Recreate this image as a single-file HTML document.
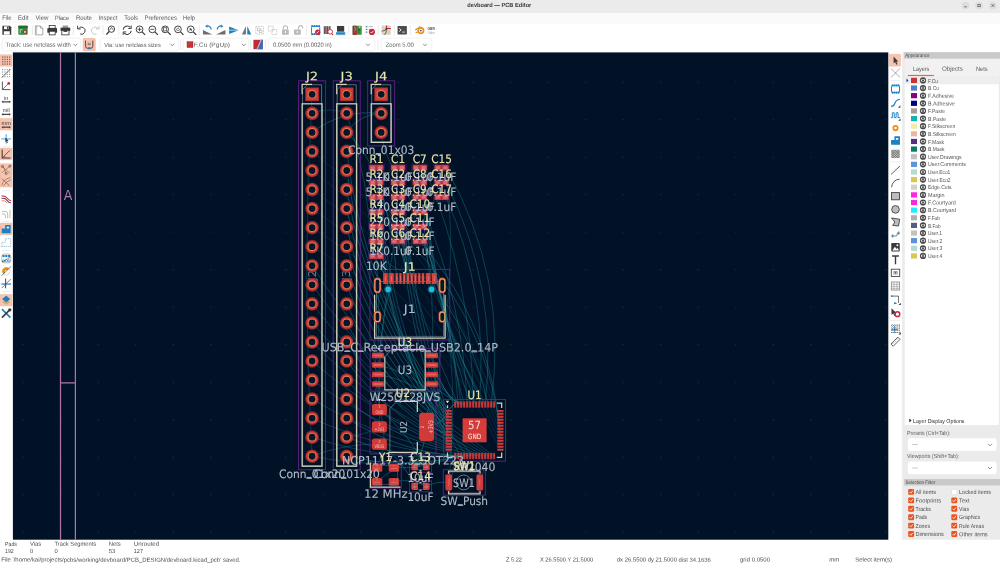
<!DOCTYPE html><html lang="en"><head><meta charset="utf-8"><title>devboard — PCB Editor</title><style>
*{box-sizing:border-box;margin:0;padding:0}
html,body{width:1000px;height:564px;overflow:hidden;background:#fff}
body{position:relative;font-family:"Liberation Sans","DejaVu Sans",sans-serif;color:#4f4f4f}
.a{position:absolute;white-space:nowrap;line-height:1}
#title{left:0;top:0;width:1000px;height:12px;background:#ebebeb}
.wb{top:1.8px;width:7.4px;height:7.4px;border-radius:50%;background:#dedede}
.ti{font-weight:bold;font-size:6.3px;color:#3a3a3a}
.m{font-size:6.15px;color:#545454}
.combo{top:38.1px;height:12.8px;border:.6px solid #e9e9e9;border-radius:2.4px;background:#fff}
.ct{font-size:5.9px;color:#5c5c5c}
#canvas{left:13px;top:53px;width:875px;height:486px;background:#011227}
#panel{left:903px;top:53px;width:97px;height:486px;background:#ebebeb}
.ph{left:903.4px;width:96.6px;height:6.4px;background:#c9c9c9}
.pht{font-size:4.9px;color:#4c4c4c}
.tab{font-size:6.3px;color:#5a5a5a}
.ln{font-size:5.55px;color:#585858}
.sw{width:6.1px;height:6.1px}
.cb{width:5.9px;height:5.9px;border-radius:1.2px;background:#e95420}
.cl{font-size:5.85px;color:#4c4c4c}
.st{font-size:5.85px;color:#4c4c4c}
.wbx{background:#fff;border-radius:2.4px}
svg{position:absolute;left:0;top:0;will-change:transform}
</style></head><body>
<div id="title" class="a"></div>
<div id="canvas" class="a"></div>
<div id="panel" class="a"></div>
<svg width="1000" height="564" viewBox="0 0 1000 564">
<defs><clipPath id="cv"><rect x="12.9" y="52.4" width="875.4" height="487.30000000000007"/></clipPath><pattern id="gd" x="735.2" y="81.6" width="37.5" height="37.5" patternUnits="userSpaceOnUse"><rect width="1.1" height="1.1" fill="#2b4669" fill-opacity=".55"/></pattern></defs>
<rect x="0" y="0" width="1000" height="564" fill="#fff"/><rect x="0" y="0" width="1000" height="12.2" fill="#ebebeb"/><rect x="0" y="12.1" width="1000" height="0.6" fill="#d6d6d6"/><rect x="0" y="12.7" width="1000" height="10.8" fill="#fafafa"/><circle cx="965.5" cy="5.5" r="3.75" fill="#dddddd"/><circle cx="979" cy="5.5" r="3.75" fill="#dddddd"/><circle cx="992.8" cy="5.5" r="3.75" fill="#dddddd"/><rect x="2.2" y="38.1" width="78.4" height="12.9" rx="2.4" fill="#fff" stroke="#e8e8e8" stroke-width=".6"/><rect x="100" y="38.1" width="78.4" height="12.9" rx="2.4" fill="#fff" stroke="#e8e8e8" stroke-width=".6"/><rect x="183.2" y="38.1" width="65.4" height="12.9" rx="2.4" fill="#fff" stroke="#e8e8e8" stroke-width=".6"/><rect x="268.2" y="38.1" width="106.6" height="12.9" rx="2.4" fill="#fff" stroke="#e8e8e8" stroke-width=".6"/><rect x="381" y="38.1" width="50.8" height="12.9" rx="2.4" fill="#fff" stroke="#e8e8e8" stroke-width=".6"/><rect x="12.9" y="52.4" width="875.4" height="487.30000000000007" fill="#011227"/><rect x="12.9" y="52.4" width="875.4" height="487.30000000000007" fill="url(#gd)"/><rect x="902.1" y="52.2" width="97.9" height="487.5" fill="#ebebeb"/><rect x="904.1" y="52.2" width="95.9" height="6.6" fill="#c9c9c9"/><rect x="904.8" y="58.8" width="95.2" height="17.4" fill="#f1f1f1"/><rect x="904.8" y="76.2" width="95.2" height="0.5" fill="#dcdcdc"/><rect x="907.8" y="74.9" width="26.1" height="1.3" fill="#e9683c"/><rect x="904.8" y="76.6" width="94" height="348.4" fill="#fff"/><rect x="904.8" y="76.6" width="94" height="7.7" fill="#eeeeee"/><rect x="911" y="77.80" width="6" height="5.2" fill="#c83434"/><rect x="911" y="85.43" width="6" height="5.2" fill="#4d7fc4"/><rect x="911" y="93.06" width="6" height="5.2" fill="#840084"/><rect x="911" y="100.70" width="6" height="5.2" fill="#000084"/><rect x="911" y="108.33" width="6" height="5.2" fill="#a89c98"/><rect x="911" y="115.96" width="6" height="5.2" fill="#12b2b0"/><rect x="911" y="123.59" width="6" height="5.2" fill="#f2eda1"/><rect x="911" y="131.22" width="6" height="5.2" fill="#e8b8a4"/><rect x="911" y="138.86" width="6" height="5.2" fill="#5a2d80"/><rect x="911" y="146.49" width="6" height="5.2" fill="#0a7a66"/><rect x="911" y="154.12" width="6" height="5.2" fill="#c2c2c2"/><rect x="911" y="161.75" width="6" height="5.2" fill="#5994dc"/><rect x="911" y="169.38" width="6" height="5.2" fill="#b4dbd2"/><rect x="911" y="177.02" width="6" height="5.2" fill="#d8c852"/><rect x="911" y="184.65" width="6" height="5.2" fill="#d0d2cd"/><rect x="911" y="192.28" width="6" height="5.2" fill="#ff26e2"/><rect x="911" y="199.91" width="6" height="5.2" fill="#ff26e2"/><rect x="911" y="207.54" width="6" height="5.2" fill="#26e9ff"/><rect x="911" y="215.18" width="6" height="5.2" fill="#afafaf"/><rect x="911" y="222.81" width="6" height="5.2" fill="#585d84"/><rect x="911" y="230.44" width="6" height="5.2" fill="#c2c2c2"/><rect x="911" y="238.07" width="6" height="5.2" fill="#5994dc"/><rect x="911" y="245.70" width="6" height="5.2" fill="#b4dbd2"/><rect x="911" y="253.34" width="6" height="5.2" fill="#d8c852"/><rect x="907.8" y="438.3" width="88.8" height="12.8" rx="2.4" fill="#fff"/><rect x="907.8" y="461.5" width="88.8" height="12.8" rx="2.4" fill="#fff"/><rect x="904.1" y="479" width="95.9" height="6.5" fill="#c9c9c9"/><rect x="908.2" y="488.95" width="5.9" height="5.9" rx="1.2" fill="#e95420"/><rect x="951.5" y="489.15" width="5.5" height="5.5" rx="1.2" fill="#fff" stroke="#cfcfcf" stroke-width=".5"/><rect x="908.2" y="497.38" width="5.9" height="5.9" rx="1.2" fill="#e95420"/><rect x="951.3" y="497.38" width="5.9" height="5.9" rx="1.2" fill="#e95420"/><rect x="908.2" y="505.81" width="5.9" height="5.9" rx="1.2" fill="#e95420"/><rect x="951.3" y="505.81" width="5.9" height="5.9" rx="1.2" fill="#e95420"/><rect x="908.2" y="514.24" width="5.9" height="5.9" rx="1.2" fill="#e95420"/><rect x="951.3" y="514.24" width="5.9" height="5.9" rx="1.2" fill="#e95420"/><rect x="908.2" y="522.67" width="5.9" height="5.9" rx="1.2" fill="#e95420"/><rect x="951.3" y="522.67" width="5.9" height="5.9" rx="1.2" fill="#e95420"/><rect x="908.2" y="531.10" width="5.9" height="5.9" rx="1.2" fill="#e95420"/><rect x="951.3" y="531.10" width="5.9" height="5.9" rx="1.2" fill="#e95420"/>
<g clip-path="url(#cv)"><path d="M60.5 52 V540 M75.4 52 V540 M60.5 382.9 H75.4" stroke="#b274a6" stroke-width="1.25" fill="none"/><text x="68" y="199.7" font-size="14.6" text-anchor="middle" fill="#b579aa" font-family="DejaVu Sans,sans-serif" textLength="8.6" lengthAdjust="spacingAndGlyphs">A</text><g font-family="DejaVu Sans,Liberation Sans,sans-serif"><g fill="none" stroke="#1d8a98" stroke-width=".85"><path d="M346.7 151.45 Q364.03 294.4 448.8 410.8" stroke-opacity="0.52"/><path d="M346.7 170.5 Q366.12 305.42 448.8 413.8" stroke-opacity="0.52"/><path d="M346.7 189.55 Q368.21 316.45 448.8 416.8" stroke-opacity="0.52"/><path d="M346.7 208.6 Q370.29 327.47 448.8 419.8" stroke-opacity="0.52"/><path d="M346.7 227.65 Q372.38 338.5 448.8 422.8" stroke-opacity="0.52"/><path d="M346.7 246.7 Q374.47 349.52 448.8 425.8" stroke-opacity="0.52"/><path d="M346.7 265.75 Q376.55 360.55 448.8 428.8" stroke-opacity="0.52"/><path d="M346.7 284.8 Q378.64 371.57 448.8 431.8" stroke-opacity="0.52"/><path d="M346.7 303.85 Q380.73 382.6 448.8 434.8" stroke-opacity="0.52"/><path d="M346.7 322.9 Q382.81 393.62 448.8 437.8" stroke-opacity="0.52"/><path d="M346.7 341.95 Q384.9 404.65 448.8 440.8" stroke-opacity="0.52"/><path d="M346.7 361 Q386.99 415.67 448.8 443.8" stroke-opacity="0.52"/><path d="M346.7 380.05 Q389.07 426.7 448.8 446.8" stroke-opacity="0.52"/><path d="M346.7 399.1 Q391.16 437.72 448.8 449.8" stroke-opacity="0.52"/><path d="M346.7 418.15 Q396.35 450.13 455.1 456.1" stroke-opacity="0.52"/><path d="M346.7 437.2 Q400.13 460.02 458.1 456.1" stroke-opacity="0.52"/><path d="M346.7 456.25 Q403.92 469.9 461.1 456.1" stroke-opacity="0.52"/><path d="M312.1 456.25 Q388.12 471.38 464.1 456.1" stroke-opacity="0.42"/><path d="M312.1 437.2 Q387.71 462.15 467.1 456.1" stroke-opacity="0.42"/><path d="M312.1 418.15 Q387.31 452.93 470.1 456.1" stroke-opacity="0.42"/><path d="M312.1 399.1 Q386.9 443.7 473.1 456.1" stroke-opacity="0.42"/><path d="M312.1 380.05 Q386.5 434.48 476.1 456.1" stroke-opacity="0.42"/><path d="M312.1 361 Q386.09 425.25 479.1 456.1" stroke-opacity="0.42"/><path d="M312.1 341.95 Q385.69 416.02 482.1 456.1" stroke-opacity="0.42"/><path d="M312.1 322.9 Q385.28 406.8 485.1 456.1" stroke-opacity="0.42"/><path d="M312.1 303.85 Q384.88 397.58 488.1 456.1" stroke-opacity="0.42"/><path d="M312.1 284.8 Q384.47 388.35 491.1 456.1" stroke-opacity="0.42"/><path d="M312.1 265.75 Q384.06 379.12 494.1 456.1" stroke-opacity="0.42"/><path d="M312.1 246.7 Q438.75 318.12 500.4 449.8" stroke-opacity="0.22"/><path d="M312.1 227.65 Q440.83 305.6 500.4 443.8" stroke-opacity="0.22"/><path d="M312.1 208.6 Q442.92 293.07 500.4 437.8" stroke-opacity="0.22"/><path d="M312.1 189.55 Q445.01 280.55 500.4 431.8" stroke-opacity="0.22"/><path d="M312.1 170.5 Q447.1 268.02 500.4 425.8" stroke-opacity="0.22"/><path d="M312.1 151.45 Q449.19 255.5 500.4 419.8" stroke-opacity="0.22"/><path d="M312.1 132.4 Q342.84 109.06 381.2 113.35" stroke-opacity="0.52"/><path d="M346.7 132.4 Q359.19 114.25 381.2 113.35" stroke-opacity="0.52"/><path d="M312.1 94.3 Q301.24 275.27 312.1 456.25" stroke-opacity="0.39"/><path d="M346.7 113.35 Q329.4 106.43 312.1 113.35" stroke-opacity="0.39"/><path d="M346.7 132.4 Q362.88 147.52 372 167.7" stroke-opacity="0.52"/><path d="M346.7 113.35 Q370.26 182.73 371 256" stroke-opacity="0.45"/><path d="M381.2 132.4 Q383.57 151.23 393 167.7" stroke-opacity="0.45"/><path d="M446 167.7 Q508.81 278.43 491.1 404.5" stroke-opacity="0.47"/><path d="M446 182.5 Q498.85 287.63 485.1 404.5" stroke-opacity="0.47"/><path d="M446 197.2 Q489.5 296.55 479.1 404.5" stroke-opacity="0.47"/><path d="M424.5 167.7 Q472.48 281.24 473.1 404.5" stroke-opacity="0.47"/><path d="M424.5 212 Q463.12 304.42 467.1 404.5" stroke-opacity="0.47"/><path d="M402.8 182.5 Q447.49 289.42 461.1 404.5" stroke-opacity="0.47"/><path d="M424.5 241.5 Q454.34 320.31 458.1 404.5" stroke-opacity="0.47"/><path d="M401.9 182.45 Q411.29 302.44 448.8 416.8" stroke-opacity="0.47"/><path d="M401.9 197.2 Q409.56 313.28 448.8 422.8" stroke-opacity="0.47"/><path d="M401.9 211.95 Q408 324.13 448.8 428.8" stroke-opacity="0.47"/><path d="M401.9 226.7 Q406.62 334.97 448.8 434.8" stroke-opacity="0.47"/><path d="M401.9 241.45 Q421.85 325.79 458.1 404.5" stroke-opacity="0.47"/><path d="M423.6 182.45 Q434.97 295.1 464.1 404.5" stroke-opacity="0.47"/><path d="M423.6 197.2 Q436.49 303.18 470.1 404.5" stroke-opacity="0.47"/><path d="M423.6 211.95 Q438.3 311.38 476.1 404.5" stroke-opacity="0.47"/><path d="M423.6 226.7 Q440.4 319.7 482.1 404.5" stroke-opacity="0.47"/><path d="M423.6 241.45 Q441.31 327.9 485.1 404.5" stroke-opacity="0.47"/><path d="M380.2 197.2 Q390.14 325.86 448.8 440.8" stroke-opacity="0.47"/><path d="M380.2 211.95 Q389 335.42 448.8 443.8" stroke-opacity="0.47"/><path d="M380.2 226.7 Q388.09 344.98 448.8 446.8" stroke-opacity="0.47"/><path d="M380.2 241.45 Q394.89 358.48 461.1 456.1" stroke-opacity="0.47"/><path d="M380.2 256.2 Q397.66 367.45 467.1 456.1" stroke-opacity="0.47"/><path d="M394.4 167.7 Q390.71 175.07 394.4 182.45" stroke-opacity="0.39"/><path d="M394.4 182.45 Q390.71 189.82 394.4 197.2" stroke-opacity="0.39"/><path d="M394.4 197.2 Q390.71 204.57 394.4 211.95" stroke-opacity="0.39"/><path d="M394.4 211.95 Q390.71 219.32 394.4 226.7" stroke-opacity="0.39"/><path d="M394.4 226.7 Q390.71 234.07 394.4 241.45" stroke-opacity="0.39"/><path d="M416.1 167.7 Q412.41 175.07 416.1 182.45" stroke-opacity="0.39"/><path d="M416.1 182.45 Q412.41 189.82 416.1 197.2" stroke-opacity="0.39"/><path d="M416.1 197.2 Q412.41 204.57 416.1 211.95" stroke-opacity="0.39"/><path d="M416.1 211.95 Q412.41 219.32 416.1 226.7" stroke-opacity="0.39"/><path d="M416.1 226.7 Q412.41 234.07 416.1 241.45" stroke-opacity="0.39"/><path d="M385.85 278.6 Q381.47 266.07 372.6 256.2" stroke-opacity="0.59"/><path d="M433.85 278.6 Q402.44 278.17 380 256.2" stroke-opacity="0.45"/><path d="M396.85 278.6 Q393.6 221.21 372.6 167.7" stroke-opacity="0.52"/><path d="M415.45 278.6 Q403.64 226.27 372.6 182.5" stroke-opacity="0.52"/><path d="M407.95 278.6 Q398.96 236.24 380.2 197.2" stroke-opacity="0.52"/><path d="M411.75 278.6 Q399.97 243.41 380.2 212" stroke-opacity="0.52"/><path d="M372.6 197.2 Q489.43 289.38 500.4 437.8" stroke-opacity="0.49"/><path d="M372.6 212 Q485.52 295.28 500.4 434.8" stroke-opacity="0.49"/><path d="M391.85 278.6 Q375.14 343.1 379.4 409.6" stroke-opacity="0.52"/><path d="M427.85 278.6 Q473.08 334.32 488.1 404.5" stroke-opacity="0.52"/><path d="M377.4 285.4 Q370.95 347.62 379.4 409.6" stroke-opacity="0.45"/><path d="M442.3 285.4 Q459.44 383.43 449 482.4" stroke-opacity="0.39"/><path d="M432.2 355.5 Q437.77 382.75 455.1 404.5" stroke-opacity="0.59"/><path d="M432.2 365 Q440.41 387.86 458.1 404.5" stroke-opacity="0.59"/><path d="M432.2 374.5 Q443.05 392.97 461.1 404.5" stroke-opacity="0.59"/><path d="M432.2 384 Q445.69 398.08 464.1 404.5" stroke-opacity="0.59"/><path d="M377.7 365 Q423.01 375.18 448.8 413.8" stroke-opacity="0.52"/><path d="M377.7 374.5 Q421.71 381.43 448.8 416.8" stroke-opacity="0.52"/><path d="M377.7 355.5 Q381.59 290.85 372.6 226.7" stroke-opacity="0.45"/><path d="M377.7 384 Q370.87 397.31 379.4 409.6" stroke-opacity="0.52"/><path d="M432.2 355.5 Q435.19 298.04 424.5 241.5" stroke-opacity="0.45"/><path d="M426.7 426.9 Q442.58 425.48 448.8 410.8" stroke-opacity="0.59"/><path d="M426.7 426.9 Q455.74 432.22 473.1 456.1" stroke-opacity="0.52"/><path d="M426.7 426.9 Q424.69 448.05 414.7 466.8" stroke-opacity="0.59"/><path d="M379.4 444.1 Q403.39 459.95 414.7 486.4" stroke-opacity="0.52"/><path d="M379.4 409.6 Q408.57 433.51 426.3 466.8" stroke-opacity="0.52"/><path d="M426.7 415 Q461.08 293.28 446 167.7" stroke-opacity="0.39"/><path d="M379.4 426.9 Q377.63 333.45 394.4 241.5" stroke-opacity="0.39"/><path d="M393.9 467.8 Q425.9 469.29 455.1 456.1" stroke-opacity="0.59"/><path d="M377.1 481.8 Q411.95 451.13 458.1 456.1" stroke-opacity="0.55"/><path d="M393.9 481.8 Q411.02 477.62 426.3 486.4" stroke-opacity="0.52"/><path d="M377.1 467.8 Q389.89 439.16 379.4 409.6" stroke-opacity="0.45"/><path d="M479.8 482.4 Q486.21 469.71 482.1 456.1" stroke-opacity="0.55"/><path d="M448.8 482.4 Q436.95 481.02 426.3 486.4" stroke-opacity="0.52"/><path d="M448.8 482.4 Q458.58 466.1 448.8 449.8" stroke-opacity="0.45"/><path d="M312.1 456.25 Q344.54 443.44 379.4 444.1" stroke-opacity="0.45"/><path d="M346.7 437.2 Q364.08 435.32 379.4 426.9" stroke-opacity="0.45"/></g><rect x="298.6" y="80.8" width="27" height="388.95" fill="none" stroke="#66208a" stroke-width=".9"/><path d="M307.34 84.77 H321.62 V465.77 H302.58 V89.54 Z" fill="none" stroke="#8893a0" stroke-width=".8" stroke-opacity=".85"/><rect x="302.12" y="103.83" width="19.95" height="362.4" fill="none" stroke="#cfd2bc" stroke-width="1.25"/><path d="M302.12 94.3 V84.32 H312.1" fill="none" stroke="#cfd2bc" stroke-width="1.25"/><text x="312.1" y="279.07" font-size="10.4" text-anchor="middle" textLength="11.02" lengthAdjust="spacingAndGlyphs" fill="#b2bbc7" fill-opacity="0.55" stroke="#b2bbc7" stroke-opacity="0.55" stroke-width="0.12" transform="rotate(-90 312.1 275.27)">J2</text><rect x="305.25" y="87.45" width="13.7" height="13.7" fill="#a82c30"/><rect x="306.15" y="88.35" width="11.9" height="11.9" fill="#d23c36"/><circle cx="312.1" cy="94.3" r="5" fill="#d84c38"/><circle cx="312.1" cy="94.3" r="4.05" fill="#e48a5e"/><circle cx="312.1" cy="94.3" r="3.4" fill="#071629"/><circle cx="312.1" cy="113.35" r="6.85" fill="#86262f"/><circle cx="312.1" cy="113.35" r="5.95" fill="#c63734"/><circle cx="312.1" cy="113.35" r="5" fill="#d84c38"/><circle cx="312.1" cy="113.35" r="4.05" fill="#e48a5e"/><circle cx="312.1" cy="113.35" r="3.4" fill="#071629"/><circle cx="312.1" cy="132.4" r="6.85" fill="#86262f"/><circle cx="312.1" cy="132.4" r="5.95" fill="#c63734"/><circle cx="312.1" cy="132.4" r="5" fill="#d84c38"/><circle cx="312.1" cy="132.4" r="4.05" fill="#e48a5e"/><circle cx="312.1" cy="132.4" r="3.4" fill="#071629"/><circle cx="312.1" cy="151.45" r="6.85" fill="#86262f"/><circle cx="312.1" cy="151.45" r="5.95" fill="#c63734"/><circle cx="312.1" cy="151.45" r="5" fill="#d84c38"/><circle cx="312.1" cy="151.45" r="4.05" fill="#e48a5e"/><circle cx="312.1" cy="151.45" r="3.4" fill="#071629"/><circle cx="312.1" cy="170.5" r="6.85" fill="#86262f"/><circle cx="312.1" cy="170.5" r="5.95" fill="#c63734"/><circle cx="312.1" cy="170.5" r="5" fill="#d84c38"/><circle cx="312.1" cy="170.5" r="4.05" fill="#e48a5e"/><circle cx="312.1" cy="170.5" r="3.4" fill="#071629"/><circle cx="312.1" cy="189.55" r="6.85" fill="#86262f"/><circle cx="312.1" cy="189.55" r="5.95" fill="#c63734"/><circle cx="312.1" cy="189.55" r="5" fill="#d84c38"/><circle cx="312.1" cy="189.55" r="4.05" fill="#e48a5e"/><circle cx="312.1" cy="189.55" r="3.4" fill="#071629"/><circle cx="312.1" cy="208.6" r="6.85" fill="#86262f"/><circle cx="312.1" cy="208.6" r="5.95" fill="#c63734"/><circle cx="312.1" cy="208.6" r="5" fill="#d84c38"/><circle cx="312.1" cy="208.6" r="4.05" fill="#e48a5e"/><circle cx="312.1" cy="208.6" r="3.4" fill="#071629"/><circle cx="312.1" cy="227.65" r="6.85" fill="#86262f"/><circle cx="312.1" cy="227.65" r="5.95" fill="#c63734"/><circle cx="312.1" cy="227.65" r="5" fill="#d84c38"/><circle cx="312.1" cy="227.65" r="4.05" fill="#e48a5e"/><circle cx="312.1" cy="227.65" r="3.4" fill="#071629"/><circle cx="312.1" cy="246.7" r="6.85" fill="#86262f"/><circle cx="312.1" cy="246.7" r="5.95" fill="#c63734"/><circle cx="312.1" cy="246.7" r="5" fill="#d84c38"/><circle cx="312.1" cy="246.7" r="4.05" fill="#e48a5e"/><circle cx="312.1" cy="246.7" r="3.4" fill="#071629"/><circle cx="312.1" cy="265.75" r="6.85" fill="#86262f"/><circle cx="312.1" cy="265.75" r="5.95" fill="#c63734"/><circle cx="312.1" cy="265.75" r="5" fill="#d84c38"/><circle cx="312.1" cy="265.75" r="4.05" fill="#e48a5e"/><circle cx="312.1" cy="265.75" r="3.4" fill="#071629"/><circle cx="312.1" cy="284.8" r="6.85" fill="#86262f"/><circle cx="312.1" cy="284.8" r="5.95" fill="#c63734"/><circle cx="312.1" cy="284.8" r="5" fill="#d84c38"/><circle cx="312.1" cy="284.8" r="4.05" fill="#e48a5e"/><circle cx="312.1" cy="284.8" r="3.4" fill="#071629"/><circle cx="312.1" cy="303.85" r="6.85" fill="#86262f"/><circle cx="312.1" cy="303.85" r="5.95" fill="#c63734"/><circle cx="312.1" cy="303.85" r="5" fill="#d84c38"/><circle cx="312.1" cy="303.85" r="4.05" fill="#e48a5e"/><circle cx="312.1" cy="303.85" r="3.4" fill="#071629"/><circle cx="312.1" cy="322.9" r="6.85" fill="#86262f"/><circle cx="312.1" cy="322.9" r="5.95" fill="#c63734"/><circle cx="312.1" cy="322.9" r="5" fill="#d84c38"/><circle cx="312.1" cy="322.9" r="4.05" fill="#e48a5e"/><circle cx="312.1" cy="322.9" r="3.4" fill="#071629"/><circle cx="312.1" cy="341.95" r="6.85" fill="#86262f"/><circle cx="312.1" cy="341.95" r="5.95" fill="#c63734"/><circle cx="312.1" cy="341.95" r="5" fill="#d84c38"/><circle cx="312.1" cy="341.95" r="4.05" fill="#e48a5e"/><circle cx="312.1" cy="341.95" r="3.4" fill="#071629"/><circle cx="312.1" cy="361" r="6.85" fill="#86262f"/><circle cx="312.1" cy="361" r="5.95" fill="#c63734"/><circle cx="312.1" cy="361" r="5" fill="#d84c38"/><circle cx="312.1" cy="361" r="4.05" fill="#e48a5e"/><circle cx="312.1" cy="361" r="3.4" fill="#071629"/><circle cx="312.1" cy="380.05" r="6.85" fill="#86262f"/><circle cx="312.1" cy="380.05" r="5.95" fill="#c63734"/><circle cx="312.1" cy="380.05" r="5" fill="#d84c38"/><circle cx="312.1" cy="380.05" r="4.05" fill="#e48a5e"/><circle cx="312.1" cy="380.05" r="3.4" fill="#071629"/><circle cx="312.1" cy="399.1" r="6.85" fill="#86262f"/><circle cx="312.1" cy="399.1" r="5.95" fill="#c63734"/><circle cx="312.1" cy="399.1" r="5" fill="#d84c38"/><circle cx="312.1" cy="399.1" r="4.05" fill="#e48a5e"/><circle cx="312.1" cy="399.1" r="3.4" fill="#071629"/><circle cx="312.1" cy="418.15" r="6.85" fill="#86262f"/><circle cx="312.1" cy="418.15" r="5.95" fill="#c63734"/><circle cx="312.1" cy="418.15" r="5" fill="#d84c38"/><circle cx="312.1" cy="418.15" r="4.05" fill="#e48a5e"/><circle cx="312.1" cy="418.15" r="3.4" fill="#071629"/><circle cx="312.1" cy="437.2" r="6.85" fill="#86262f"/><circle cx="312.1" cy="437.2" r="5.95" fill="#c63734"/><circle cx="312.1" cy="437.2" r="5" fill="#d84c38"/><circle cx="312.1" cy="437.2" r="4.05" fill="#e48a5e"/><circle cx="312.1" cy="437.2" r="3.4" fill="#071629"/><circle cx="312.1" cy="456.25" r="6.85" fill="#86262f"/><circle cx="312.1" cy="456.25" r="5.95" fill="#c63734"/><circle cx="312.1" cy="456.25" r="5" fill="#d84c38"/><circle cx="312.1" cy="456.25" r="4.05" fill="#e48a5e"/><circle cx="312.1" cy="456.25" r="3.4" fill="#071629"/><rect x="333.2" y="80.8" width="27" height="388.95" fill="none" stroke="#66208a" stroke-width=".9"/><path d="M341.94 84.77 H356.22 V465.77 H337.18 V89.54 Z" fill="none" stroke="#8893a0" stroke-width=".8" stroke-opacity=".85"/><rect x="336.72" y="103.83" width="19.95" height="362.4" fill="none" stroke="#cfd2bc" stroke-width="1.25"/><path d="M336.72 94.3 V84.32 H346.7" fill="none" stroke="#cfd2bc" stroke-width="1.25"/><text x="346.7" y="279.07" font-size="10.4" text-anchor="middle" textLength="11.02" lengthAdjust="spacingAndGlyphs" fill="#b2bbc7" fill-opacity="0.55" stroke="#b2bbc7" stroke-opacity="0.55" stroke-width="0.12" transform="rotate(-90 346.7 275.27)">J3</text><rect x="339.85" y="87.45" width="13.7" height="13.7" fill="#a82c30"/><rect x="340.75" y="88.35" width="11.9" height="11.9" fill="#d23c36"/><circle cx="346.7" cy="94.3" r="5" fill="#d84c38"/><circle cx="346.7" cy="94.3" r="4.05" fill="#e48a5e"/><circle cx="346.7" cy="94.3" r="3.4" fill="#071629"/><circle cx="346.7" cy="113.35" r="6.85" fill="#86262f"/><circle cx="346.7" cy="113.35" r="5.95" fill="#c63734"/><circle cx="346.7" cy="113.35" r="5" fill="#d84c38"/><circle cx="346.7" cy="113.35" r="4.05" fill="#e48a5e"/><circle cx="346.7" cy="113.35" r="3.4" fill="#071629"/><circle cx="346.7" cy="132.4" r="6.85" fill="#86262f"/><circle cx="346.7" cy="132.4" r="5.95" fill="#c63734"/><circle cx="346.7" cy="132.4" r="5" fill="#d84c38"/><circle cx="346.7" cy="132.4" r="4.05" fill="#e48a5e"/><circle cx="346.7" cy="132.4" r="3.4" fill="#071629"/><circle cx="346.7" cy="151.45" r="6.85" fill="#86262f"/><circle cx="346.7" cy="151.45" r="5.95" fill="#c63734"/><circle cx="346.7" cy="151.45" r="5" fill="#d84c38"/><circle cx="346.7" cy="151.45" r="4.05" fill="#e48a5e"/><circle cx="346.7" cy="151.45" r="3.4" fill="#071629"/><circle cx="346.7" cy="170.5" r="6.85" fill="#86262f"/><circle cx="346.7" cy="170.5" r="5.95" fill="#c63734"/><circle cx="346.7" cy="170.5" r="5" fill="#d84c38"/><circle cx="346.7" cy="170.5" r="4.05" fill="#e48a5e"/><circle cx="346.7" cy="170.5" r="3.4" fill="#071629"/><circle cx="346.7" cy="189.55" r="6.85" fill="#86262f"/><circle cx="346.7" cy="189.55" r="5.95" fill="#c63734"/><circle cx="346.7" cy="189.55" r="5" fill="#d84c38"/><circle cx="346.7" cy="189.55" r="4.05" fill="#e48a5e"/><circle cx="346.7" cy="189.55" r="3.4" fill="#071629"/><circle cx="346.7" cy="208.6" r="6.85" fill="#86262f"/><circle cx="346.7" cy="208.6" r="5.95" fill="#c63734"/><circle cx="346.7" cy="208.6" r="5" fill="#d84c38"/><circle cx="346.7" cy="208.6" r="4.05" fill="#e48a5e"/><circle cx="346.7" cy="208.6" r="3.4" fill="#071629"/><circle cx="346.7" cy="227.65" r="6.85" fill="#86262f"/><circle cx="346.7" cy="227.65" r="5.95" fill="#c63734"/><circle cx="346.7" cy="227.65" r="5" fill="#d84c38"/><circle cx="346.7" cy="227.65" r="4.05" fill="#e48a5e"/><circle cx="346.7" cy="227.65" r="3.4" fill="#071629"/><circle cx="346.7" cy="246.7" r="6.85" fill="#86262f"/><circle cx="346.7" cy="246.7" r="5.95" fill="#c63734"/><circle cx="346.7" cy="246.7" r="5" fill="#d84c38"/><circle cx="346.7" cy="246.7" r="4.05" fill="#e48a5e"/><circle cx="346.7" cy="246.7" r="3.4" fill="#071629"/><circle cx="346.7" cy="265.75" r="6.85" fill="#86262f"/><circle cx="346.7" cy="265.75" r="5.95" fill="#c63734"/><circle cx="346.7" cy="265.75" r="5" fill="#d84c38"/><circle cx="346.7" cy="265.75" r="4.05" fill="#e48a5e"/><circle cx="346.7" cy="265.75" r="3.4" fill="#071629"/><circle cx="346.7" cy="284.8" r="6.85" fill="#86262f"/><circle cx="346.7" cy="284.8" r="5.95" fill="#c63734"/><circle cx="346.7" cy="284.8" r="5" fill="#d84c38"/><circle cx="346.7" cy="284.8" r="4.05" fill="#e48a5e"/><circle cx="346.7" cy="284.8" r="3.4" fill="#071629"/><circle cx="346.7" cy="303.85" r="6.85" fill="#86262f"/><circle cx="346.7" cy="303.85" r="5.95" fill="#c63734"/><circle cx="346.7" cy="303.85" r="5" fill="#d84c38"/><circle cx="346.7" cy="303.85" r="4.05" fill="#e48a5e"/><circle cx="346.7" cy="303.85" r="3.4" fill="#071629"/><circle cx="346.7" cy="322.9" r="6.85" fill="#86262f"/><circle cx="346.7" cy="322.9" r="5.95" fill="#c63734"/><circle cx="346.7" cy="322.9" r="5" fill="#d84c38"/><circle cx="346.7" cy="322.9" r="4.05" fill="#e48a5e"/><circle cx="346.7" cy="322.9" r="3.4" fill="#071629"/><circle cx="346.7" cy="341.95" r="6.85" fill="#86262f"/><circle cx="346.7" cy="341.95" r="5.95" fill="#c63734"/><circle cx="346.7" cy="341.95" r="5" fill="#d84c38"/><circle cx="346.7" cy="341.95" r="4.05" fill="#e48a5e"/><circle cx="346.7" cy="341.95" r="3.4" fill="#071629"/><circle cx="346.7" cy="361" r="6.85" fill="#86262f"/><circle cx="346.7" cy="361" r="5.95" fill="#c63734"/><circle cx="346.7" cy="361" r="5" fill="#d84c38"/><circle cx="346.7" cy="361" r="4.05" fill="#e48a5e"/><circle cx="346.7" cy="361" r="3.4" fill="#071629"/><circle cx="346.7" cy="380.05" r="6.85" fill="#86262f"/><circle cx="346.7" cy="380.05" r="5.95" fill="#c63734"/><circle cx="346.7" cy="380.05" r="5" fill="#d84c38"/><circle cx="346.7" cy="380.05" r="4.05" fill="#e48a5e"/><circle cx="346.7" cy="380.05" r="3.4" fill="#071629"/><circle cx="346.7" cy="399.1" r="6.85" fill="#86262f"/><circle cx="346.7" cy="399.1" r="5.95" fill="#c63734"/><circle cx="346.7" cy="399.1" r="5" fill="#d84c38"/><circle cx="346.7" cy="399.1" r="4.05" fill="#e48a5e"/><circle cx="346.7" cy="399.1" r="3.4" fill="#071629"/><circle cx="346.7" cy="418.15" r="6.85" fill="#86262f"/><circle cx="346.7" cy="418.15" r="5.95" fill="#c63734"/><circle cx="346.7" cy="418.15" r="5" fill="#d84c38"/><circle cx="346.7" cy="418.15" r="4.05" fill="#e48a5e"/><circle cx="346.7" cy="418.15" r="3.4" fill="#071629"/><circle cx="346.7" cy="437.2" r="6.85" fill="#86262f"/><circle cx="346.7" cy="437.2" r="5.95" fill="#c63734"/><circle cx="346.7" cy="437.2" r="5" fill="#d84c38"/><circle cx="346.7" cy="437.2" r="4.05" fill="#e48a5e"/><circle cx="346.7" cy="437.2" r="3.4" fill="#071629"/><circle cx="346.7" cy="456.25" r="6.85" fill="#86262f"/><circle cx="346.7" cy="456.25" r="5.95" fill="#c63734"/><circle cx="346.7" cy="456.25" r="5" fill="#d84c38"/><circle cx="346.7" cy="456.25" r="4.05" fill="#e48a5e"/><circle cx="346.7" cy="456.25" r="3.4" fill="#071629"/><rect x="367.7" y="80.8" width="27" height="65.1" fill="none" stroke="#66208a" stroke-width=".9"/><path d="M376.44 84.77 H390.72 V141.93 H371.68 V89.54 Z" fill="none" stroke="#8893a0" stroke-width=".8" stroke-opacity=".85"/><rect x="371.22" y="103.83" width="19.95" height="38.55" fill="none" stroke="#cfd2bc" stroke-width="1.25"/><path d="M371.22 94.3 V84.32 H381.2" fill="none" stroke="#cfd2bc" stroke-width="1.25"/><rect x="374.35" y="87.45" width="13.7" height="13.7" fill="#a82c30"/><rect x="375.25" y="88.35" width="11.9" height="11.9" fill="#d23c36"/><circle cx="381.2" cy="94.3" r="5" fill="#d84c38"/><circle cx="381.2" cy="94.3" r="4.05" fill="#e48a5e"/><circle cx="381.2" cy="94.3" r="3.4" fill="#071629"/><circle cx="381.2" cy="113.35" r="6.85" fill="#86262f"/><circle cx="381.2" cy="113.35" r="5.95" fill="#c63734"/><circle cx="381.2" cy="113.35" r="5" fill="#d84c38"/><circle cx="381.2" cy="113.35" r="4.05" fill="#e48a5e"/><circle cx="381.2" cy="113.35" r="3.4" fill="#071629"/><circle cx="381.2" cy="132.4" r="6.85" fill="#86262f"/><circle cx="381.2" cy="132.4" r="5.95" fill="#c63734"/><circle cx="381.2" cy="132.4" r="5" fill="#d84c38"/><circle cx="381.2" cy="132.4" r="4.05" fill="#e48a5e"/><circle cx="381.2" cy="132.4" r="3.4" fill="#071629"/><rect x="368.3" y="163.95" width="16.2" height="7.5" fill="none" stroke="#66208a" stroke-width=".6" stroke-opacity=".6"/><rect x="369.2" y="164.8" width="14.4" height="5.8" rx="1.2" fill="#c93e46"/><rect x="375.9" y="164.8" width="1" height="5.8" fill="#8a2c3c" fill-opacity=".55"/><rect x="370.4" y="166.2" width="4.4" height="3" rx="1" fill="#e89aa2" fill-opacity=".5"/><rect x="378" y="166.2" width="4.4" height="3" rx="1" fill="#e89aa2" fill-opacity=".5"/><rect x="368.3" y="178.7" width="16.2" height="7.5" fill="none" stroke="#66208a" stroke-width=".6" stroke-opacity=".6"/><rect x="369.2" y="179.55" width="14.4" height="5.8" rx="1.2" fill="#c93e46"/><rect x="375.9" y="179.55" width="1" height="5.8" fill="#8a2c3c" fill-opacity=".55"/><rect x="370.4" y="180.95" width="4.4" height="3" rx="1" fill="#e89aa2" fill-opacity=".5"/><rect x="378" y="180.95" width="4.4" height="3" rx="1" fill="#e89aa2" fill-opacity=".5"/><rect x="368.3" y="193.45" width="16.2" height="7.5" fill="none" stroke="#66208a" stroke-width=".6" stroke-opacity=".6"/><rect x="369.2" y="194.3" width="14.4" height="5.8" rx="1.2" fill="#c93e46"/><rect x="375.9" y="194.3" width="1" height="5.8" fill="#8a2c3c" fill-opacity=".55"/><rect x="370.4" y="195.7" width="4.4" height="3" rx="1" fill="#e89aa2" fill-opacity=".5"/><rect x="378" y="195.7" width="4.4" height="3" rx="1" fill="#e89aa2" fill-opacity=".5"/><rect x="368.3" y="208.2" width="16.2" height="7.5" fill="none" stroke="#66208a" stroke-width=".6" stroke-opacity=".6"/><rect x="369.2" y="209.05" width="14.4" height="5.8" rx="1.2" fill="#c93e46"/><rect x="375.9" y="209.05" width="1" height="5.8" fill="#8a2c3c" fill-opacity=".55"/><rect x="370.4" y="210.45" width="4.4" height="3" rx="1" fill="#e89aa2" fill-opacity=".5"/><rect x="378" y="210.45" width="4.4" height="3" rx="1" fill="#e89aa2" fill-opacity=".5"/><rect x="368.3" y="222.95" width="16.2" height="7.5" fill="none" stroke="#66208a" stroke-width=".6" stroke-opacity=".6"/><rect x="369.2" y="223.8" width="14.4" height="5.8" rx="1.2" fill="#c93e46"/><rect x="375.9" y="223.8" width="1" height="5.8" fill="#8a2c3c" fill-opacity=".55"/><rect x="370.4" y="225.2" width="4.4" height="3" rx="1" fill="#e89aa2" fill-opacity=".5"/><rect x="378" y="225.2" width="4.4" height="3" rx="1" fill="#e89aa2" fill-opacity=".5"/><rect x="368.3" y="237.7" width="16.2" height="7.5" fill="none" stroke="#66208a" stroke-width=".6" stroke-opacity=".6"/><rect x="369.2" y="238.55" width="14.4" height="5.8" rx="1.2" fill="#c93e46"/><rect x="375.9" y="238.55" width="1" height="5.8" fill="#8a2c3c" fill-opacity=".55"/><rect x="370.4" y="239.95" width="4.4" height="3" rx="1" fill="#e89aa2" fill-opacity=".5"/><rect x="378" y="239.95" width="4.4" height="3" rx="1" fill="#e89aa2" fill-opacity=".5"/><rect x="368.3" y="252.45" width="16.2" height="7.5" fill="none" stroke="#66208a" stroke-width=".6" stroke-opacity=".6"/><rect x="369.2" y="253.3" width="14.4" height="5.8" rx="1.2" fill="#c93e46"/><rect x="375.9" y="253.3" width="1" height="5.8" fill="#8a2c3c" fill-opacity=".55"/><rect x="370.4" y="254.7" width="4.4" height="3" rx="1" fill="#e89aa2" fill-opacity=".5"/><rect x="378" y="254.7" width="4.4" height="3" rx="1" fill="#e89aa2" fill-opacity=".5"/><rect x="390" y="163.95" width="16.2" height="7.5" fill="none" stroke="#66208a" stroke-width=".6" stroke-opacity=".6"/><rect x="390.9" y="164.8" width="14.4" height="5.8" rx="1.2" fill="#c93e46"/><rect x="397.6" y="164.8" width="1" height="5.8" fill="#8a2c3c" fill-opacity=".55"/><rect x="392.1" y="166.2" width="4.4" height="3" rx="1" fill="#e89aa2" fill-opacity=".5"/><rect x="399.7" y="166.2" width="4.4" height="3" rx="1" fill="#e89aa2" fill-opacity=".5"/><rect x="411.7" y="163.95" width="16.2" height="7.5" fill="none" stroke="#66208a" stroke-width=".6" stroke-opacity=".6"/><rect x="412.6" y="164.8" width="14.4" height="5.8" rx="1.2" fill="#c93e46"/><rect x="419.3" y="164.8" width="1" height="5.8" fill="#8a2c3c" fill-opacity=".55"/><rect x="413.8" y="166.2" width="4.4" height="3" rx="1" fill="#e89aa2" fill-opacity=".5"/><rect x="421.4" y="166.2" width="4.4" height="3" rx="1" fill="#e89aa2" fill-opacity=".5"/><rect x="390" y="178.7" width="16.2" height="7.5" fill="none" stroke="#66208a" stroke-width=".6" stroke-opacity=".6"/><rect x="390.9" y="179.55" width="14.4" height="5.8" rx="1.2" fill="#c93e46"/><rect x="397.6" y="179.55" width="1" height="5.8" fill="#8a2c3c" fill-opacity=".55"/><rect x="392.1" y="180.95" width="4.4" height="3" rx="1" fill="#e89aa2" fill-opacity=".5"/><rect x="399.7" y="180.95" width="4.4" height="3" rx="1" fill="#e89aa2" fill-opacity=".5"/><rect x="411.7" y="178.7" width="16.2" height="7.5" fill="none" stroke="#66208a" stroke-width=".6" stroke-opacity=".6"/><rect x="412.6" y="179.55" width="14.4" height="5.8" rx="1.2" fill="#c93e46"/><rect x="419.3" y="179.55" width="1" height="5.8" fill="#8a2c3c" fill-opacity=".55"/><rect x="413.8" y="180.95" width="4.4" height="3" rx="1" fill="#e89aa2" fill-opacity=".5"/><rect x="421.4" y="180.95" width="4.4" height="3" rx="1" fill="#e89aa2" fill-opacity=".5"/><rect x="390" y="193.45" width="16.2" height="7.5" fill="none" stroke="#66208a" stroke-width=".6" stroke-opacity=".6"/><rect x="390.9" y="194.3" width="14.4" height="5.8" rx="1.2" fill="#c93e46"/><rect x="397.6" y="194.3" width="1" height="5.8" fill="#8a2c3c" fill-opacity=".55"/><rect x="392.1" y="195.7" width="4.4" height="3" rx="1" fill="#e89aa2" fill-opacity=".5"/><rect x="399.7" y="195.7" width="4.4" height="3" rx="1" fill="#e89aa2" fill-opacity=".5"/><rect x="411.7" y="193.45" width="16.2" height="7.5" fill="none" stroke="#66208a" stroke-width=".6" stroke-opacity=".6"/><rect x="412.6" y="194.3" width="14.4" height="5.8" rx="1.2" fill="#c93e46"/><rect x="419.3" y="194.3" width="1" height="5.8" fill="#8a2c3c" fill-opacity=".55"/><rect x="413.8" y="195.7" width="4.4" height="3" rx="1" fill="#e89aa2" fill-opacity=".5"/><rect x="421.4" y="195.7" width="4.4" height="3" rx="1" fill="#e89aa2" fill-opacity=".5"/><rect x="390" y="208.2" width="16.2" height="7.5" fill="none" stroke="#66208a" stroke-width=".6" stroke-opacity=".6"/><rect x="390.9" y="209.05" width="14.4" height="5.8" rx="1.2" fill="#c93e46"/><rect x="397.6" y="209.05" width="1" height="5.8" fill="#8a2c3c" fill-opacity=".55"/><rect x="392.1" y="210.45" width="4.4" height="3" rx="1" fill="#e89aa2" fill-opacity=".5"/><rect x="399.7" y="210.45" width="4.4" height="3" rx="1" fill="#e89aa2" fill-opacity=".5"/><rect x="411.7" y="208.2" width="16.2" height="7.5" fill="none" stroke="#66208a" stroke-width=".6" stroke-opacity=".6"/><rect x="412.6" y="209.05" width="14.4" height="5.8" rx="1.2" fill="#c93e46"/><rect x="419.3" y="209.05" width="1" height="5.8" fill="#8a2c3c" fill-opacity=".55"/><rect x="413.8" y="210.45" width="4.4" height="3" rx="1" fill="#e89aa2" fill-opacity=".5"/><rect x="421.4" y="210.45" width="4.4" height="3" rx="1" fill="#e89aa2" fill-opacity=".5"/><rect x="390" y="222.95" width="16.2" height="7.5" fill="none" stroke="#66208a" stroke-width=".6" stroke-opacity=".6"/><rect x="390.9" y="223.8" width="14.4" height="5.8" rx="1.2" fill="#c93e46"/><rect x="397.6" y="223.8" width="1" height="5.8" fill="#8a2c3c" fill-opacity=".55"/><rect x="392.1" y="225.2" width="4.4" height="3" rx="1" fill="#e89aa2" fill-opacity=".5"/><rect x="399.7" y="225.2" width="4.4" height="3" rx="1" fill="#e89aa2" fill-opacity=".5"/><rect x="411.7" y="222.95" width="16.2" height="7.5" fill="none" stroke="#66208a" stroke-width=".6" stroke-opacity=".6"/><rect x="412.6" y="223.8" width="14.4" height="5.8" rx="1.2" fill="#c93e46"/><rect x="419.3" y="223.8" width="1" height="5.8" fill="#8a2c3c" fill-opacity=".55"/><rect x="413.8" y="225.2" width="4.4" height="3" rx="1" fill="#e89aa2" fill-opacity=".5"/><rect x="421.4" y="225.2" width="4.4" height="3" rx="1" fill="#e89aa2" fill-opacity=".5"/><rect x="390" y="237.7" width="16.2" height="7.5" fill="none" stroke="#66208a" stroke-width=".6" stroke-opacity=".6"/><rect x="390.9" y="238.55" width="14.4" height="5.8" rx="1.2" fill="#c93e46"/><rect x="397.6" y="238.55" width="1" height="5.8" fill="#8a2c3c" fill-opacity=".55"/><rect x="392.1" y="239.95" width="4.4" height="3" rx="1" fill="#e89aa2" fill-opacity=".5"/><rect x="399.7" y="239.95" width="4.4" height="3" rx="1" fill="#e89aa2" fill-opacity=".5"/><rect x="411.7" y="237.7" width="16.2" height="7.5" fill="none" stroke="#66208a" stroke-width=".6" stroke-opacity=".6"/><rect x="412.6" y="238.55" width="14.4" height="5.8" rx="1.2" fill="#c93e46"/><rect x="419.3" y="238.55" width="1" height="5.8" fill="#8a2c3c" fill-opacity=".55"/><rect x="413.8" y="239.95" width="4.4" height="3" rx="1" fill="#e89aa2" fill-opacity=".5"/><rect x="421.4" y="239.95" width="4.4" height="3" rx="1" fill="#e89aa2" fill-opacity=".5"/><rect x="433.5" y="163.95" width="16.2" height="7.5" fill="none" stroke="#66208a" stroke-width=".6" stroke-opacity=".6"/><rect x="434.4" y="164.8" width="14.4" height="5.8" rx="1.2" fill="#c93e46"/><rect x="441.1" y="164.8" width="1" height="5.8" fill="#8a2c3c" fill-opacity=".55"/><rect x="435.6" y="166.2" width="4.4" height="3" rx="1" fill="#e89aa2" fill-opacity=".5"/><rect x="443.2" y="166.2" width="4.4" height="3" rx="1" fill="#e89aa2" fill-opacity=".5"/><rect x="433.5" y="178.7" width="16.2" height="7.5" fill="none" stroke="#66208a" stroke-width=".6" stroke-opacity=".6"/><rect x="434.4" y="179.55" width="14.4" height="5.8" rx="1.2" fill="#c93e46"/><rect x="441.1" y="179.55" width="1" height="5.8" fill="#8a2c3c" fill-opacity=".55"/><rect x="435.6" y="180.95" width="4.4" height="3" rx="1" fill="#e89aa2" fill-opacity=".5"/><rect x="443.2" y="180.95" width="4.4" height="3" rx="1" fill="#e89aa2" fill-opacity=".5"/><rect x="433.5" y="193.45" width="16.2" height="7.5" fill="none" stroke="#66208a" stroke-width=".6" stroke-opacity=".6"/><rect x="434.4" y="194.3" width="14.4" height="5.8" rx="1.2" fill="#c93e46"/><rect x="441.1" y="194.3" width="1" height="5.8" fill="#8a2c3c" fill-opacity=".55"/><rect x="435.6" y="195.7" width="4.4" height="3" rx="1" fill="#e89aa2" fill-opacity=".5"/><rect x="443.2" y="195.7" width="4.4" height="3" rx="1" fill="#e89aa2" fill-opacity=".5"/><rect x="369.95" y="269.38" width="79.8" height="70.65" fill="none" stroke="#66208a" stroke-width=".9"/><rect x="376.33" y="281.52" width="67.05" height="54.75" fill="none" stroke="#8893a0" stroke-width=".7" stroke-opacity=".8"/><path d="M374.6 294.65 V338.15 H445.1 V294.65" fill="none" stroke="#cfd2bc" stroke-width="1.25"/><rect x="383.23" y="273.12" width="4.5" height="10.88" fill="#d8443f"/><rect x="385.03" y="275.96" width=".9" height="5.2" fill="#f2a8a8" fill-opacity=".5"/><rect x="389.23" y="273.12" width="4.5" height="10.88" fill="#d8443f"/><rect x="391.03" y="275.96" width=".9" height="5.2" fill="#f2a8a8" fill-opacity=".5"/><rect x="395.6" y="273.12" width="2.25" height="10.88" fill="#d8443f"/><rect x="396.28" y="275.96" width=".9" height="5.2" fill="#f2a8a8" fill-opacity=".5"/><rect x="399.35" y="273.12" width="2.25" height="10.88" fill="#d8443f"/><rect x="400.03" y="275.96" width=".9" height="5.2" fill="#f2a8a8" fill-opacity=".5"/><rect x="403.1" y="273.12" width="2.25" height="10.88" fill="#d8443f"/><rect x="403.78" y="275.96" width=".9" height="5.2" fill="#f2a8a8" fill-opacity=".5"/><rect x="406.85" y="273.12" width="2.25" height="10.88" fill="#d8443f"/><rect x="407.53" y="275.96" width=".9" height="5.2" fill="#f2a8a8" fill-opacity=".5"/><rect x="410.6" y="273.12" width="2.25" height="10.88" fill="#d8443f"/><rect x="411.28" y="275.96" width=".9" height="5.2" fill="#f2a8a8" fill-opacity=".5"/><rect x="414.35" y="273.12" width="2.25" height="10.88" fill="#d8443f"/><rect x="415.03" y="275.96" width=".9" height="5.2" fill="#f2a8a8" fill-opacity=".5"/><rect x="418.1" y="273.12" width="2.25" height="10.88" fill="#d8443f"/><rect x="418.78" y="275.96" width=".9" height="5.2" fill="#f2a8a8" fill-opacity=".5"/><rect x="421.85" y="273.12" width="2.25" height="10.88" fill="#d8443f"/><rect x="422.53" y="275.96" width=".9" height="5.2" fill="#f2a8a8" fill-opacity=".5"/><rect x="425.98" y="273.12" width="4.5" height="10.88" fill="#d8443f"/><rect x="427.78" y="275.96" width=".9" height="5.2" fill="#f2a8a8" fill-opacity=".5"/><rect x="431.98" y="273.12" width="4.5" height="10.88" fill="#d8443f"/><rect x="433.78" y="275.96" width=".9" height="5.2" fill="#f2a8a8" fill-opacity=".5"/><rect x="383.23" y="273.12" width="53.25" height="10.88" fill="#d03a38" fill-opacity=".22"/><rect x="373.7" y="277.55" width="7.5" height="15.75" rx="3.75" fill="#d03a38"/><rect x="374.38" y="278.22" width="6.15" height="14.4" rx="3.07" fill="#eea45c"/><rect x="375.58" y="279.42" width="3.75" height="12" rx="1.88" fill="#071629"/><rect x="373.7" y="310.77" width="7.5" height="12" rx="3.75" fill="#d03a38"/><rect x="374.38" y="311.45" width="6.15" height="10.65" rx="3.07" fill="#eea45c"/><rect x="375.58" y="312.65" width="3.75" height="8.25" rx="1.88" fill="#071629"/><rect x="438.5" y="277.55" width="7.5" height="15.75" rx="3.75" fill="#d03a38"/><rect x="439.18" y="278.22" width="6.15" height="14.4" rx="3.07" fill="#eea45c"/><rect x="440.38" y="279.42" width="3.75" height="12" rx="1.88" fill="#071629"/><rect x="438.5" y="310.77" width="7.5" height="12" rx="3.75" fill="#d03a38"/><rect x="439.18" y="311.45" width="6.15" height="10.65" rx="3.07" fill="#eea45c"/><rect x="440.38" y="312.65" width="3.75" height="8.25" rx="1.88" fill="#071629"/><circle cx="388.18" cy="289.4" r="4.2" fill="#0d4f66" fill-opacity=".85"/><circle cx="388.18" cy="289.4" r="2.8" fill="#1fbedb"/><circle cx="431.53" cy="289.4" r="4.2" fill="#0d4f66" fill-opacity=".85"/><circle cx="431.53" cy="289.4" r="2.8" fill="#1fbedb"/><rect x="370.12" y="348.3" width="69.75" height="42.9" fill="none" stroke="#66208a" stroke-width=".9"/><rect x="371.9" y="352.76" width="12.2" height="5.4" rx="1.2" fill="#d03a38"/><rect x="373.6" y="354.56" width="8.8" height="1.8" fill="#f2a8a8" fill-opacity=".4"/><rect x="371.9" y="362.29" width="12.2" height="5.4" rx="1.2" fill="#d03a38"/><rect x="373.6" y="364.09" width="8.8" height="1.8" fill="#f2a8a8" fill-opacity=".4"/><rect x="371.9" y="371.81" width="12.2" height="5.4" rx="1.2" fill="#d03a38"/><rect x="373.6" y="373.61" width="8.8" height="1.8" fill="#f2a8a8" fill-opacity=".4"/><rect x="371.9" y="381.34" width="12.2" height="5.4" rx="1.2" fill="#d03a38"/><rect x="373.6" y="383.14" width="8.8" height="1.8" fill="#f2a8a8" fill-opacity=".4"/><rect x="425.9" y="352.76" width="12.2" height="5.4" rx="1.2" fill="#d03a38"/><rect x="427.6" y="354.56" width="8.8" height="1.8" fill="#f2a8a8" fill-opacity=".4"/><rect x="425.9" y="362.29" width="12.2" height="5.4" rx="1.2" fill="#d03a38"/><rect x="427.6" y="364.09" width="8.8" height="1.8" fill="#f2a8a8" fill-opacity=".4"/><rect x="425.9" y="371.81" width="12.2" height="5.4" rx="1.2" fill="#d03a38"/><rect x="427.6" y="373.61" width="8.8" height="1.8" fill="#f2a8a8" fill-opacity=".4"/><rect x="425.9" y="381.34" width="12.2" height="5.4" rx="1.2" fill="#d03a38"/><rect x="427.6" y="383.14" width="8.8" height="1.8" fill="#f2a8a8" fill-opacity=".4"/><path d="M391.82 349.57 H425.18 V389.93 H384.82 V356.57" fill="none" stroke="#cfd2bc" stroke-width="1.15"/><path d="M384.82 356.57 L391.82 349.57" stroke="#8893a0" stroke-width=".7"/><path d="M378.75 350.1 l-1.6 -2.2 h3.2 z" fill="#ece8ae"/><rect x="370" y="399.9" width="66" height="54" fill="none" stroke="#66208a" stroke-width=".9"/><rect x="371.88" y="404.02" width="15" height="11.25" rx="2.6" fill="#d03a38"/><rect x="371.88" y="421.27" width="15" height="11.25" rx="2.6" fill="#d03a38"/><rect x="371.88" y="438.52" width="15" height="11.25" rx="2.6" fill="#d03a38"/><rect x="419.12" y="412.65" width="15" height="28.5" rx="3.4" fill="#d03a38"/><path d="M394.68 401.32 H417.32 V411.9 M417.32 441.9 V452.47 H388.68" fill="none" stroke="#cfd2bc" stroke-width="1.25"/><path d="M389.88 451.27 V408.52 L395.88 402.52" fill="none" stroke="#8893a0" stroke-width=".7"/><path d="M379.38 401.25 l-1.7 -2.3 h3.4 z" fill="#ece8ae"/><rect x="443.7" y="399.4" width="61.8" height="61.8" fill="none" stroke="#66208a" stroke-width=".9"/><rect x="454.28" y="401.24" width="1.65" height="6.56" rx=".8" fill="#d03a38"/><rect x="454.28" y="452.8" width="1.65" height="6.56" rx=".8" fill="#d03a38"/><rect x="445.54" y="409.98" width="6.56" height="1.65" rx=".8" fill="#d03a38"/><rect x="497.1" y="409.98" width="6.56" height="1.65" rx=".8" fill="#d03a38"/><rect x="457.28" y="401.24" width="1.65" height="6.56" rx=".8" fill="#d03a38"/><rect x="457.28" y="452.8" width="1.65" height="6.56" rx=".8" fill="#d03a38"/><rect x="445.54" y="412.98" width="6.56" height="1.65" rx=".8" fill="#d03a38"/><rect x="497.1" y="412.98" width="6.56" height="1.65" rx=".8" fill="#d03a38"/><rect x="460.28" y="401.24" width="1.65" height="6.56" rx=".8" fill="#d03a38"/><rect x="460.28" y="452.8" width="1.65" height="6.56" rx=".8" fill="#d03a38"/><rect x="445.54" y="415.98" width="6.56" height="1.65" rx=".8" fill="#d03a38"/><rect x="497.1" y="415.98" width="6.56" height="1.65" rx=".8" fill="#d03a38"/><rect x="463.28" y="401.24" width="1.65" height="6.56" rx=".8" fill="#d03a38"/><rect x="463.28" y="452.8" width="1.65" height="6.56" rx=".8" fill="#d03a38"/><rect x="445.54" y="418.98" width="6.56" height="1.65" rx=".8" fill="#d03a38"/><rect x="497.1" y="418.98" width="6.56" height="1.65" rx=".8" fill="#d03a38"/><rect x="466.28" y="401.24" width="1.65" height="6.56" rx=".8" fill="#d03a38"/><rect x="466.28" y="452.8" width="1.65" height="6.56" rx=".8" fill="#d03a38"/><rect x="445.54" y="421.98" width="6.56" height="1.65" rx=".8" fill="#d03a38"/><rect x="497.1" y="421.98" width="6.56" height="1.65" rx=".8" fill="#d03a38"/><rect x="469.28" y="401.24" width="1.65" height="6.56" rx=".8" fill="#d03a38"/><rect x="469.28" y="452.8" width="1.65" height="6.56" rx=".8" fill="#d03a38"/><rect x="445.54" y="424.98" width="6.56" height="1.65" rx=".8" fill="#d03a38"/><rect x="497.1" y="424.98" width="6.56" height="1.65" rx=".8" fill="#d03a38"/><rect x="472.28" y="401.24" width="1.65" height="6.56" rx=".8" fill="#d03a38"/><rect x="472.28" y="452.8" width="1.65" height="6.56" rx=".8" fill="#d03a38"/><rect x="445.54" y="427.98" width="6.56" height="1.65" rx=".8" fill="#d03a38"/><rect x="497.1" y="427.98" width="6.56" height="1.65" rx=".8" fill="#d03a38"/><rect x="475.28" y="401.24" width="1.65" height="6.56" rx=".8" fill="#d03a38"/><rect x="475.28" y="452.8" width="1.65" height="6.56" rx=".8" fill="#d03a38"/><rect x="445.54" y="430.98" width="6.56" height="1.65" rx=".8" fill="#d03a38"/><rect x="497.1" y="430.98" width="6.56" height="1.65" rx=".8" fill="#d03a38"/><rect x="478.28" y="401.24" width="1.65" height="6.56" rx=".8" fill="#d03a38"/><rect x="478.28" y="452.8" width="1.65" height="6.56" rx=".8" fill="#d03a38"/><rect x="445.54" y="433.98" width="6.56" height="1.65" rx=".8" fill="#d03a38"/><rect x="497.1" y="433.98" width="6.56" height="1.65" rx=".8" fill="#d03a38"/><rect x="481.28" y="401.24" width="1.65" height="6.56" rx=".8" fill="#d03a38"/><rect x="481.28" y="452.8" width="1.65" height="6.56" rx=".8" fill="#d03a38"/><rect x="445.54" y="436.98" width="6.56" height="1.65" rx=".8" fill="#d03a38"/><rect x="497.1" y="436.98" width="6.56" height="1.65" rx=".8" fill="#d03a38"/><rect x="484.28" y="401.24" width="1.65" height="6.56" rx=".8" fill="#d03a38"/><rect x="484.28" y="452.8" width="1.65" height="6.56" rx=".8" fill="#d03a38"/><rect x="445.54" y="439.98" width="6.56" height="1.65" rx=".8" fill="#d03a38"/><rect x="497.1" y="439.98" width="6.56" height="1.65" rx=".8" fill="#d03a38"/><rect x="487.28" y="401.24" width="1.65" height="6.56" rx=".8" fill="#d03a38"/><rect x="487.28" y="452.8" width="1.65" height="6.56" rx=".8" fill="#d03a38"/><rect x="445.54" y="442.98" width="6.56" height="1.65" rx=".8" fill="#d03a38"/><rect x="497.1" y="442.98" width="6.56" height="1.65" rx=".8" fill="#d03a38"/><rect x="490.28" y="401.24" width="1.65" height="6.56" rx=".8" fill="#d03a38"/><rect x="490.28" y="452.8" width="1.65" height="6.56" rx=".8" fill="#d03a38"/><rect x="445.54" y="445.98" width="6.56" height="1.65" rx=".8" fill="#d03a38"/><rect x="497.1" y="445.98" width="6.56" height="1.65" rx=".8" fill="#d03a38"/><rect x="493.28" y="401.24" width="1.65" height="6.56" rx=".8" fill="#d03a38"/><rect x="493.28" y="452.8" width="1.65" height="6.56" rx=".8" fill="#d03a38"/><rect x="445.54" y="448.98" width="6.56" height="1.65" rx=".8" fill="#d03a38"/><rect x="497.1" y="448.98" width="6.56" height="1.65" rx=".8" fill="#d03a38"/><rect x="454.28" y="401.24" width="40.65" height="6.56" fill="#d03a38" fill-opacity=".28"/><rect x="454.28" y="452.8" width="40.65" height="6.56" fill="#d03a38" fill-opacity=".28"/><rect x="445.54" y="409.98" width="6.56" height="40.65" fill="#d03a38" fill-opacity=".28"/><rect x="497.1" y="409.98" width="6.56" height="40.65" fill="#d03a38" fill-opacity=".28"/><rect x="462.6" y="418.3" width="24" height="24" fill="#d83c3a"/><path d="M496.8 403.23 H501.68 V408.1 M501.68 452.5 V457.38 H496.8 M452.4 457.38 H447.53 V452.5 M447.53 408.1 V405.23" fill="none" stroke="#cfd2bc" stroke-width="1.25"/><path d="M448.35 410.05 L454.35 404.05" stroke="#8893a0" stroke-width=".6"/><path d="M447.45 403.15 l-1.7 -2.3 h3.4 z" fill="#ece8ae"/><rect x="369.75" y="461.73" width="31.5" height="26.25" fill="none" stroke="#66208a" stroke-width=".9"/><rect x="371.85" y="463.95" width="10.5" height="7.8" rx="1.6" fill="#d03a38"/><rect x="374.1" y="467.65" width="6" height="1.6" fill="#f2a8a8" fill-opacity=".35"/><rect x="376.5" y="465.05" width="1.2" height="1.8" fill="#f2a8a8" fill-opacity=".4"/><rect x="371.85" y="477.95" width="10.5" height="7.8" rx="1.6" fill="#d03a38"/><rect x="374.1" y="481.65" width="6" height="1.6" fill="#f2a8a8" fill-opacity=".35"/><rect x="376.5" y="479.05" width="1.2" height="1.8" fill="#f2a8a8" fill-opacity=".4"/><rect x="388.65" y="463.95" width="10.5" height="7.8" rx="1.6" fill="#d03a38"/><rect x="390.9" y="467.65" width="6" height="1.6" fill="#f2a8a8" fill-opacity=".35"/><rect x="393.3" y="465.05" width="1.2" height="1.8" fill="#f2a8a8" fill-opacity=".4"/><rect x="388.65" y="477.95" width="10.5" height="7.8" rx="1.6" fill="#d03a38"/><rect x="390.9" y="481.65" width="6" height="1.6" fill="#f2a8a8" fill-opacity=".35"/><rect x="393.3" y="479.05" width="1.2" height="1.8" fill="#f2a8a8" fill-opacity=".4"/><path d="M370.5 462.48 V487.23 H400.5" fill="none" stroke="#cfd2bc" stroke-width="1.25"/><rect x="373.5" y="465.48" width="24" height="18.75" fill="none" stroke="#8893a0" stroke-width=".5" stroke-opacity=".7"/><rect x="409.4" y="461.32" width="22.2" height="10.95" fill="none" stroke="#66208a" stroke-width=".8"/><rect x="411.31" y="463.24" width="6.75" height="7.12" rx="1.4" fill="#d03a38"/><rect x="412.69" y="466.6" width="4" height="1.4" fill="#f2a8a8" fill-opacity=".4"/><rect x="414.19" y="464.4" width="1" height="1.5" fill="#f2a8a8" fill-opacity=".4"/><rect x="422.94" y="463.24" width="6.75" height="7.12" rx="1.4" fill="#d03a38"/><rect x="424.31" y="466.6" width="4" height="1.4" fill="#f2a8a8" fill-opacity=".4"/><rect x="425.81" y="464.4" width="1" height="1.5" fill="#f2a8a8" fill-opacity=".4"/><rect x="414.5" y="463.8" width="12" height="6" fill="none" stroke="#8893a0" stroke-width=".5" stroke-opacity=".7"/><path d="M419.5 462.98 H421.5 M419.5 470.62 H421.5" stroke="#cfd2bc" stroke-width="1"/><rect x="409.4" y="480.92" width="22.2" height="10.95" fill="none" stroke="#66208a" stroke-width=".8"/><rect x="411.31" y="482.84" width="6.75" height="7.12" rx="1.4" fill="#d03a38"/><rect x="412.69" y="486.2" width="4" height="1.4" fill="#f2a8a8" fill-opacity=".4"/><rect x="414.19" y="484" width="1" height="1.5" fill="#f2a8a8" fill-opacity=".4"/><rect x="422.94" y="482.84" width="6.75" height="7.12" rx="1.4" fill="#d03a38"/><rect x="424.31" y="486.2" width="4" height="1.4" fill="#f2a8a8" fill-opacity=".4"/><rect x="425.81" y="484" width="1" height="1.5" fill="#f2a8a8" fill-opacity=".4"/><rect x="414.5" y="483.4" width="12" height="6" fill="none" stroke="#8893a0" stroke-width=".5" stroke-opacity=".7"/><path d="M419.5 482.57 H421.5 M419.5 490.22 H421.5" stroke="#cfd2bc" stroke-width="1"/><rect x="443.3" y="469.65" width="42" height="25.5" fill="none" stroke="#66208a" stroke-width=".9"/><rect x="445.4" y="474.4" width="6.8" height="16" rx="1.4" fill="#d03a38"/><rect x="448.3" y="478.9" width="1" height="7" fill="#f2a8a8" fill-opacity=".35"/><rect x="476.4" y="474.4" width="6.8" height="16" rx="1.4" fill="#d03a38"/><rect x="479.3" y="478.9" width="1" height="7" fill="#f2a8a8" fill-opacity=".35"/><path d="M448.55 473.8 V471 H480.05 V473.8 M448.55 491 V493.8 H480.05 V491" fill="none" stroke="#cfd2bc" stroke-width="1.25"/><circle cx="463.7" cy="482.4" r="7.4" fill="none" stroke="#8893a0" stroke-width=".8"/><rect x="449.7" y="472" width="29.2" height="20.8" fill="none" stroke="#8893a0" stroke-width=".5" stroke-opacity=".6"/><text x="312.1" y="80.16" font-size="11.6" text-anchor="middle" textLength="12.24" lengthAdjust="spacingAndGlyphs" fill="#ece8ae" fill-opacity="1" stroke="#ece8ae" stroke-opacity="1" stroke-width="0.12" transform="rotate(.03 312.1 75.92)">J2</text><text x="312.1" y="477.96" font-size="11.6" text-anchor="middle" textLength="66.3" lengthAdjust="spacingAndGlyphs" fill="#b2bbc7" fill-opacity="1" stroke="#b2bbc7" stroke-opacity="1" stroke-width="0.12" transform="rotate(.03 312.1 473.72)">Conn<tspan dy="-2">_</tspan><tspan dy="2">0</tspan>1x20</text><path d="M306.75 477.41 h4.73" stroke="#b2bbc7" stroke-opacity="1" stroke-width="1" fill="none"/><text x="346.7" y="80.16" font-size="11.6" text-anchor="middle" textLength="12.24" lengthAdjust="spacingAndGlyphs" fill="#ece8ae" fill-opacity="1" stroke="#ece8ae" stroke-opacity="1" stroke-width="0.12" transform="rotate(.03 346.7 75.92)">J3</text><text x="346.7" y="477.96" font-size="11.6" text-anchor="middle" textLength="66.3" lengthAdjust="spacingAndGlyphs" fill="#b2bbc7" fill-opacity="1" stroke="#b2bbc7" stroke-opacity="1" stroke-width="0.12" transform="rotate(.03 346.7 473.72)">Conn<tspan dy="-2">_</tspan><tspan dy="2">0</tspan>1x20</text><path d="M341.35 477.41 h4.73" stroke="#b2bbc7" stroke-opacity="1" stroke-width="1" fill="none"/><text x="381.2" y="80.16" font-size="11.6" text-anchor="middle" textLength="12.24" lengthAdjust="spacingAndGlyphs" fill="#ece8ae" fill-opacity="1" stroke="#ece8ae" stroke-opacity="1" stroke-width="0.12" transform="rotate(.03 381.2 75.92)">J4</text><text x="381.2" y="154.11" font-size="11.6" text-anchor="middle" textLength="66.3" lengthAdjust="spacingAndGlyphs" fill="#b2bbc7" fill-opacity="1" stroke="#b2bbc7" stroke-opacity="1" stroke-width="0.12" transform="rotate(.03 381.2 149.88)">Conn<tspan dy="-2">_</tspan><tspan dy="2">0</tspan>1x03</text><path d="M375.85 153.56 h4.73" stroke="#b2bbc7" stroke-opacity="1" stroke-width="1" fill="none"/><text x="377.6" y="181.33" font-size="11.6" text-anchor="middle" textLength="24.14" lengthAdjust="spacingAndGlyphs" fill="#b2bbc7" fill-opacity="1" stroke="#b2bbc7" stroke-opacity="1" stroke-width="0.12" transform="rotate(.03 377.6 177.1)">5.1K</text><text x="377.6" y="196.08" font-size="11.6" text-anchor="middle" textLength="24.14" lengthAdjust="spacingAndGlyphs" fill="#b2bbc7" fill-opacity="1" stroke="#b2bbc7" stroke-opacity="1" stroke-width="0.12" transform="rotate(.03 377.6 191.85)">5.1K</text><text x="376.4" y="210.83" font-size="11.6" text-anchor="middle" textLength="13.6" lengthAdjust="spacingAndGlyphs" fill="#b2bbc7" fill-opacity="1" stroke="#b2bbc7" stroke-opacity="1" stroke-width="0.12" transform="rotate(.03 376.4 206.6)">27</text><text x="376.4" y="225.58" font-size="11.6" text-anchor="middle" textLength="13.6" lengthAdjust="spacingAndGlyphs" fill="#b2bbc7" fill-opacity="1" stroke="#b2bbc7" stroke-opacity="1" stroke-width="0.12" transform="rotate(.03 376.4 221.35)">27</text><text x="376.4" y="240.33" font-size="11.6" text-anchor="middle" textLength="13.94" lengthAdjust="spacingAndGlyphs" fill="#b2bbc7" fill-opacity="1" stroke="#b2bbc7" stroke-opacity="1" stroke-width="0.12" transform="rotate(.03 376.4 236.1)">1K</text><text x="376.4" y="255.08" font-size="11.6" text-anchor="middle" textLength="13.94" lengthAdjust="spacingAndGlyphs" fill="#b2bbc7" fill-opacity="1" stroke="#b2bbc7" stroke-opacity="1" stroke-width="0.12" transform="rotate(.03 376.4 250.85)">1K</text><text x="376.4" y="269.83" font-size="11.6" text-anchor="middle" textLength="20.74" lengthAdjust="spacingAndGlyphs" fill="#b2bbc7" fill-opacity="1" stroke="#b2bbc7" stroke-opacity="1" stroke-width="0.12" transform="rotate(.03 376.4 265.6)">10K</text><text x="398.1" y="181.33" font-size="11.6" text-anchor="middle" textLength="29.58" lengthAdjust="spacingAndGlyphs" fill="#b2bbc7" fill-opacity="1" stroke="#b2bbc7" stroke-opacity="1" stroke-width="0.12" transform="rotate(.03 398.1 177.1)">0.1uF</text><text x="419.8" y="181.33" font-size="11.6" text-anchor="middle" textLength="29.58" lengthAdjust="spacingAndGlyphs" fill="#b2bbc7" fill-opacity="1" stroke="#b2bbc7" stroke-opacity="1" stroke-width="0.12" transform="rotate(.03 419.8 177.1)">0.1uF</text><text x="398.1" y="196.08" font-size="11.6" text-anchor="middle" textLength="29.58" lengthAdjust="spacingAndGlyphs" fill="#b2bbc7" fill-opacity="1" stroke="#b2bbc7" stroke-opacity="1" stroke-width="0.12" transform="rotate(.03 398.1 191.85)">0.1uF</text><text x="419.8" y="196.08" font-size="11.6" text-anchor="middle" textLength="29.58" lengthAdjust="spacingAndGlyphs" fill="#b2bbc7" fill-opacity="1" stroke="#b2bbc7" stroke-opacity="1" stroke-width="0.12" transform="rotate(.03 419.8 191.85)">0.1uF</text><text x="398.1" y="210.83" font-size="11.6" text-anchor="middle" textLength="29.58" lengthAdjust="spacingAndGlyphs" fill="#b2bbc7" fill-opacity="1" stroke="#b2bbc7" stroke-opacity="1" stroke-width="0.12" transform="rotate(.03 398.1 206.6)">0.1uF</text><text x="419.8" y="210.83" font-size="11.6" text-anchor="middle" textLength="29.58" lengthAdjust="spacingAndGlyphs" fill="#b2bbc7" fill-opacity="1" stroke="#b2bbc7" stroke-opacity="1" stroke-width="0.12" transform="rotate(.03 419.8 206.6)">0.1uF</text><text x="398.1" y="225.58" font-size="11.6" text-anchor="middle" textLength="29.58" lengthAdjust="spacingAndGlyphs" fill="#b2bbc7" fill-opacity="1" stroke="#b2bbc7" stroke-opacity="1" stroke-width="0.12" transform="rotate(.03 398.1 221.35)">0.1uF</text><text x="419.8" y="225.58" font-size="11.6" text-anchor="middle" textLength="29.58" lengthAdjust="spacingAndGlyphs" fill="#b2bbc7" fill-opacity="1" stroke="#b2bbc7" stroke-opacity="1" stroke-width="0.12" transform="rotate(.03 419.8 221.35)">0.1uF</text><text x="398.1" y="240.33" font-size="11.6" text-anchor="middle" textLength="29.58" lengthAdjust="spacingAndGlyphs" fill="#b2bbc7" fill-opacity="1" stroke="#b2bbc7" stroke-opacity="1" stroke-width="0.12" transform="rotate(.03 398.1 236.1)">0.1uF</text><text x="419.8" y="240.33" font-size="11.6" text-anchor="middle" textLength="29.58" lengthAdjust="spacingAndGlyphs" fill="#b2bbc7" fill-opacity="1" stroke="#b2bbc7" stroke-opacity="1" stroke-width="0.12" transform="rotate(.03 419.8 236.1)">0.1uF</text><text x="398.1" y="255.08" font-size="11.6" text-anchor="middle" textLength="29.58" lengthAdjust="spacingAndGlyphs" fill="#b2bbc7" fill-opacity="1" stroke="#b2bbc7" stroke-opacity="1" stroke-width="0.12" transform="rotate(.03 398.1 250.85)">0.1uF</text><text x="419.8" y="255.08" font-size="11.6" text-anchor="middle" textLength="29.58" lengthAdjust="spacingAndGlyphs" fill="#b2bbc7" fill-opacity="1" stroke="#b2bbc7" stroke-opacity="1" stroke-width="0.12" transform="rotate(.03 419.8 250.85)">0.1uF</text><text x="441.6" y="181.33" font-size="11.6" text-anchor="middle" textLength="29.58" lengthAdjust="spacingAndGlyphs" fill="#b2bbc7" fill-opacity="1" stroke="#b2bbc7" stroke-opacity="1" stroke-width="0.12" transform="rotate(.03 441.6 177.1)">0.1uF</text><text x="441.6" y="196.08" font-size="11.6" text-anchor="middle" textLength="29.58" lengthAdjust="spacingAndGlyphs" fill="#b2bbc7" fill-opacity="1" stroke="#b2bbc7" stroke-opacity="1" stroke-width="0.12" transform="rotate(.03 441.6 191.85)">0.1uF</text><text x="441.6" y="210.83" font-size="11.6" text-anchor="middle" textLength="29.58" lengthAdjust="spacingAndGlyphs" fill="#b2bbc7" fill-opacity="1" stroke="#b2bbc7" stroke-opacity="1" stroke-width="0.12" transform="rotate(.03 441.6 206.6)">0.1uF</text><text x="409.85" y="313.13" font-size="11.6" text-anchor="middle" textLength="12.24" lengthAdjust="spacingAndGlyphs" fill="#b2bbc7" fill-opacity="1" stroke="#b2bbc7" stroke-opacity="1" stroke-width="0.12" transform="rotate(.03 409.85 308.9)">J1</text><text x="409.85" y="351.38" font-size="11.6" text-anchor="middle" textLength="176.5" lengthAdjust="spacingAndGlyphs" fill="#b2bbc7" fill-opacity="1" stroke="#b2bbc7" stroke-opacity="1" stroke-width="0.12" transform="rotate(.03 409.85 347.15)">USB<tspan dy="-2">_</tspan><tspan dy="2">C</tspan><tspan dy="-2">_</tspan><tspan dy="2">R</tspan>eceptacle<tspan dy="-2">_</tspan><tspan dy="2">U</tspan>SB2.0<tspan dy="-2">_</tspan><tspan dy="2">1</tspan>4P</text><path d="M344.79 350.83 h4.98 M358.15 350.83 h4.98 M425.71 350.83 h4.98 M471.91 350.83 h4.98" stroke="#b2bbc7" stroke-opacity="1" stroke-width="1" fill="none"/><text x="405" y="373.98" font-size="11.6" text-anchor="middle" textLength="14.28" lengthAdjust="spacingAndGlyphs" fill="#b2bbc7" fill-opacity="1" stroke="#b2bbc7" stroke-opacity="1" stroke-width="0.12" transform="rotate(.03 405 369.75)">U3</text><text x="405" y="400.58" font-size="11.6" text-anchor="middle" textLength="70.5" lengthAdjust="spacingAndGlyphs" fill="#b2bbc7" fill-opacity="1" stroke="#b2bbc7" stroke-opacity="1" stroke-width="0.12" transform="rotate(.03 405 396.35)">W25Q128JVS</text><text x="403.3" y="430.26" font-size="9.2" text-anchor="middle" textLength="12" lengthAdjust="spacingAndGlyphs" fill="#b2bbc7" fill-opacity="1" stroke="#b2bbc7" stroke-opacity="1" stroke-width="0.1" transform="rotate(-90 403.3 426.9)">U2</text><text x="403" y="464.43" font-size="11.6" text-anchor="middle" textLength="122" lengthAdjust="spacingAndGlyphs" fill="#b2bbc7" fill-opacity="1" stroke="#b2bbc7" stroke-opacity="1" stroke-width="0.12" transform="rotate(.03 403 460.2)">NCP1117-3.3<tspan dy="-2">_</tspan><tspan dy="2">S</tspan>OT223</text><path d="M414.98 463.88 h4.95" stroke="#b2bbc7" stroke-opacity="1" stroke-width="1" fill="none"/><text x="474.6" y="470.53" font-size="11.6" text-anchor="middle" textLength="41.48" lengthAdjust="spacingAndGlyphs" fill="#b2bbc7" fill-opacity="1" stroke="#b2bbc7" stroke-opacity="1" stroke-width="0.12" transform="rotate(.03 474.6 466.3)">RP2040</text><text x="385.8" y="497.68" font-size="11.6" text-anchor="middle" textLength="43.6" lengthAdjust="spacingAndGlyphs" fill="#b2bbc7" fill-opacity="1" stroke="#b2bbc7" stroke-opacity="1" stroke-width="0.12" transform="rotate(.03 385.8 493.45)">12 MHz</text><text x="420.5" y="481.73" font-size="11.6" text-anchor="middle" textLength="26.18" lengthAdjust="spacingAndGlyphs" fill="#b2bbc7" fill-opacity="1" stroke="#b2bbc7" stroke-opacity="1" stroke-width="0.12" transform="rotate(.03 420.5 477.5)">10uF</text><text x="420.5" y="501.33" font-size="11.6" text-anchor="middle" textLength="26.18" lengthAdjust="spacingAndGlyphs" fill="#b2bbc7" fill-opacity="1" stroke="#b2bbc7" stroke-opacity="1" stroke-width="0.12" transform="rotate(.03 420.5 497.1)">10uF</text><text x="463.9" y="486.63" font-size="11.6" text-anchor="middle" textLength="21.76" lengthAdjust="spacingAndGlyphs" fill="#b2bbc7" fill-opacity="1" stroke="#b2bbc7" stroke-opacity="1" stroke-width="0.12" transform="rotate(.03 463.9 482.4)">SW1</text><text x="464.3" y="505.33" font-size="11.6" text-anchor="middle" textLength="47.6" lengthAdjust="spacingAndGlyphs" fill="#b2bbc7" fill-opacity="1" stroke="#b2bbc7" stroke-opacity="1" stroke-width="0.12" transform="rotate(.03 464.3 501.1)">SW<tspan dy="-2">_</tspan><tspan dy="2">P</tspan>ush</text><path d="M457.92 504.78 h4.67" stroke="#b2bbc7" stroke-opacity="1" stroke-width="1" fill="none"/><text x="474.6" y="428.89" font-size="11.2" text-anchor="middle" textLength="12.92" lengthAdjust="spacingAndGlyphs" fill="#f0dcd8" fill-opacity="1" stroke="#f0dcd8" stroke-opacity="1" stroke-width="0" transform="rotate(.03 474.6 424.8)">57</text><text x="474.6" y="439.33" font-size="7.2" text-anchor="middle" textLength="13.06" lengthAdjust="spacingAndGlyphs" fill="#f0dcd8" fill-opacity="1" stroke="#f0dcd8" stroke-opacity="1" stroke-width="0.12" transform="rotate(.03 474.6 436.7)">GND</text><text x="379.4" y="408.48" font-size="4.2" text-anchor="middle" textLength="2.04" lengthAdjust="spacingAndGlyphs" fill="#f0dcd8" fill-opacity="0.85" stroke="#f0dcd8" stroke-opacity="0.85" stroke-width="0" transform="rotate(.03 379.4 406.95)">1</text><text x="379.4" y="413.7" font-size="4.8" text-anchor="middle" textLength="7.83" lengthAdjust="spacingAndGlyphs" fill="#f0dcd8" fill-opacity="0.85" stroke="#f0dcd8" stroke-opacity="0.85" stroke-width="0" transform="rotate(.03 379.4 411.95)">GND</text><text x="379.4" y="425.73" font-size="4.2" text-anchor="middle" textLength="2.04" lengthAdjust="spacingAndGlyphs" fill="#f0dcd8" fill-opacity="0.85" stroke="#f0dcd8" stroke-opacity="0.85" stroke-width="0" transform="rotate(.03 379.4 424.2)">2</text><text x="379.4" y="430.95" font-size="4.8" text-anchor="middle" textLength="9.79" lengthAdjust="spacingAndGlyphs" fill="#f0dcd8" fill-opacity="0.85" stroke="#f0dcd8" stroke-opacity="0.85" stroke-width="0" transform="rotate(.03 379.4 429.2)">+3V3</text><text x="379.4" y="442.98" font-size="4.2" text-anchor="middle" textLength="2.04" lengthAdjust="spacingAndGlyphs" fill="#f0dcd8" fill-opacity="0.85" stroke="#f0dcd8" stroke-opacity="0.85" stroke-width="0" transform="rotate(.03 379.4 441.45)">3</text><text x="379.4" y="448.2" font-size="4.8" text-anchor="middle" textLength="9.91" lengthAdjust="spacingAndGlyphs" fill="#f0dcd8" fill-opacity="0.85" stroke="#f0dcd8" stroke-opacity="0.85" stroke-width="0" transform="rotate(.03 379.4 446.45)">VBUS</text><text x="422.2" y="428.72" font-size="5" text-anchor="middle" textLength="2.45" lengthAdjust="spacingAndGlyphs" fill="#f0dcd8" fill-opacity="0.85" stroke="#f0dcd8" stroke-opacity="0.85" stroke-width="0" transform="rotate(-90 422.2 426.9)">2</text><text x="430.6" y="429.24" font-size="6.4" text-anchor="middle" textLength="13.6" lengthAdjust="spacingAndGlyphs" fill="#f0dcd8" fill-opacity="0.85" stroke="#f0dcd8" stroke-opacity="0.85" stroke-width="0" transform="rotate(-90 430.6 426.9)">+3V3</text><text x="376.4" y="163.33" font-size="11.6" text-anchor="middle" textLength="13.94" lengthAdjust="spacingAndGlyphs" fill="#ece8ae" fill-opacity="1" stroke="#ece8ae" stroke-opacity="1" stroke-width="0.12" transform="rotate(.03 376.4 159.1)">R1</text><text x="376.4" y="178.08" font-size="11.6" text-anchor="middle" textLength="13.94" lengthAdjust="spacingAndGlyphs" fill="#ece8ae" fill-opacity="1" stroke="#ece8ae" stroke-opacity="1" stroke-width="0.12" transform="rotate(.03 376.4 173.85)">R2</text><text x="376.4" y="192.83" font-size="11.6" text-anchor="middle" textLength="13.94" lengthAdjust="spacingAndGlyphs" fill="#ece8ae" fill-opacity="1" stroke="#ece8ae" stroke-opacity="1" stroke-width="0.12" transform="rotate(.03 376.4 188.6)">R3</text><text x="376.4" y="207.58" font-size="11.6" text-anchor="middle" textLength="13.94" lengthAdjust="spacingAndGlyphs" fill="#ece8ae" fill-opacity="1" stroke="#ece8ae" stroke-opacity="1" stroke-width="0.12" transform="rotate(.03 376.4 203.35)">R4</text><text x="376.4" y="222.33" font-size="11.6" text-anchor="middle" textLength="13.94" lengthAdjust="spacingAndGlyphs" fill="#ece8ae" fill-opacity="1" stroke="#ece8ae" stroke-opacity="1" stroke-width="0.12" transform="rotate(.03 376.4 218.1)">R5</text><text x="376.4" y="237.08" font-size="11.6" text-anchor="middle" textLength="13.94" lengthAdjust="spacingAndGlyphs" fill="#ece8ae" fill-opacity="1" stroke="#ece8ae" stroke-opacity="1" stroke-width="0.12" transform="rotate(.03 376.4 232.85)">R6</text><text x="376.4" y="251.83" font-size="11.6" text-anchor="middle" textLength="13.94" lengthAdjust="spacingAndGlyphs" fill="#ece8ae" fill-opacity="1" stroke="#ece8ae" stroke-opacity="1" stroke-width="0.12" transform="rotate(.03 376.4 247.6)">R7</text><text x="398.1" y="163.33" font-size="11.6" text-anchor="middle" textLength="13.94" lengthAdjust="spacingAndGlyphs" fill="#ece8ae" fill-opacity="1" stroke="#ece8ae" stroke-opacity="1" stroke-width="0.12" transform="rotate(.03 398.1 159.1)">C1</text><text x="398.1" y="178.08" font-size="11.6" text-anchor="middle" textLength="13.94" lengthAdjust="spacingAndGlyphs" fill="#ece8ae" fill-opacity="1" stroke="#ece8ae" stroke-opacity="1" stroke-width="0.12" transform="rotate(.03 398.1 173.85)">C2</text><text x="398.1" y="192.83" font-size="11.6" text-anchor="middle" textLength="13.94" lengthAdjust="spacingAndGlyphs" fill="#ece8ae" fill-opacity="1" stroke="#ece8ae" stroke-opacity="1" stroke-width="0.12" transform="rotate(.03 398.1 188.6)">C3</text><text x="398.1" y="207.58" font-size="11.6" text-anchor="middle" textLength="13.94" lengthAdjust="spacingAndGlyphs" fill="#ece8ae" fill-opacity="1" stroke="#ece8ae" stroke-opacity="1" stroke-width="0.12" transform="rotate(.03 398.1 203.35)">C4</text><text x="398.1" y="222.33" font-size="11.6" text-anchor="middle" textLength="13.94" lengthAdjust="spacingAndGlyphs" fill="#ece8ae" fill-opacity="1" stroke="#ece8ae" stroke-opacity="1" stroke-width="0.12" transform="rotate(.03 398.1 218.1)">C5</text><text x="398.1" y="237.08" font-size="11.6" text-anchor="middle" textLength="13.94" lengthAdjust="spacingAndGlyphs" fill="#ece8ae" fill-opacity="1" stroke="#ece8ae" stroke-opacity="1" stroke-width="0.12" transform="rotate(.03 398.1 232.85)">C6</text><text x="419.8" y="163.33" font-size="11.6" text-anchor="middle" textLength="13.94" lengthAdjust="spacingAndGlyphs" fill="#ece8ae" fill-opacity="1" stroke="#ece8ae" stroke-opacity="1" stroke-width="0.12" transform="rotate(.03 419.8 159.1)">C7</text><text x="419.8" y="178.08" font-size="11.6" text-anchor="middle" textLength="13.94" lengthAdjust="spacingAndGlyphs" fill="#ece8ae" fill-opacity="1" stroke="#ece8ae" stroke-opacity="1" stroke-width="0.12" transform="rotate(.03 419.8 173.85)">C8</text><text x="419.8" y="192.83" font-size="11.6" text-anchor="middle" textLength="13.94" lengthAdjust="spacingAndGlyphs" fill="#ece8ae" fill-opacity="1" stroke="#ece8ae" stroke-opacity="1" stroke-width="0.12" transform="rotate(.03 419.8 188.6)">C9</text><text x="419.8" y="207.58" font-size="11.6" text-anchor="middle" textLength="20.74" lengthAdjust="spacingAndGlyphs" fill="#ece8ae" fill-opacity="1" stroke="#ece8ae" stroke-opacity="1" stroke-width="0.12" transform="rotate(.03 419.8 203.35)">C10</text><text x="419.8" y="222.33" font-size="11.6" text-anchor="middle" textLength="20.74" lengthAdjust="spacingAndGlyphs" fill="#ece8ae" fill-opacity="1" stroke="#ece8ae" stroke-opacity="1" stroke-width="0.12" transform="rotate(.03 419.8 218.1)">C11</text><text x="419.8" y="237.08" font-size="11.6" text-anchor="middle" textLength="20.74" lengthAdjust="spacingAndGlyphs" fill="#ece8ae" fill-opacity="1" stroke="#ece8ae" stroke-opacity="1" stroke-width="0.12" transform="rotate(.03 419.8 232.85)">C12</text><text x="441.6" y="163.33" font-size="11.6" text-anchor="middle" textLength="20.74" lengthAdjust="spacingAndGlyphs" fill="#ece8ae" fill-opacity="1" stroke="#ece8ae" stroke-opacity="1" stroke-width="0.12" transform="rotate(.03 441.6 159.1)">C15</text><text x="441.6" y="178.08" font-size="11.6" text-anchor="middle" textLength="20.74" lengthAdjust="spacingAndGlyphs" fill="#ece8ae" fill-opacity="1" stroke="#ece8ae" stroke-opacity="1" stroke-width="0.12" transform="rotate(.03 441.6 173.85)">C16</text><text x="441.6" y="192.83" font-size="11.6" text-anchor="middle" textLength="20.74" lengthAdjust="spacingAndGlyphs" fill="#ece8ae" fill-opacity="1" stroke="#ece8ae" stroke-opacity="1" stroke-width="0.12" transform="rotate(.03 441.6 188.6)">C17</text><text x="409.85" y="270.8" font-size="11.6" text-anchor="middle" textLength="12.24" lengthAdjust="spacingAndGlyphs" fill="#ece8ae" fill-opacity="1" stroke="#ece8ae" stroke-opacity="1" stroke-width="0.12" transform="rotate(.03 409.85 266.56)">J1</text><text x="405" y="346.08" font-size="11.6" text-anchor="middle" textLength="14.28" lengthAdjust="spacingAndGlyphs" fill="#ece8ae" fill-opacity="1" stroke="#ece8ae" stroke-opacity="1" stroke-width="0.12" transform="rotate(.03 405 341.85)">U3</text><text x="403" y="397.03" font-size="11.6" text-anchor="middle" textLength="14.28" lengthAdjust="spacingAndGlyphs" fill="#ece8ae" fill-opacity="1" stroke="#ece8ae" stroke-opacity="1" stroke-width="0.12" transform="rotate(.03 403 392.8)">U2</text><text x="474.6" y="398.53" font-size="11.6" text-anchor="middle" textLength="14.28" lengthAdjust="spacingAndGlyphs" fill="#ece8ae" fill-opacity="1" stroke="#ece8ae" stroke-opacity="1" stroke-width="0.12" transform="rotate(.03 474.6 394.3)">U1</text><text x="385.5" y="460.58" font-size="11.6" text-anchor="middle" textLength="12.92" lengthAdjust="spacingAndGlyphs" fill="#ece8ae" fill-opacity="1" stroke="#ece8ae" stroke-opacity="1" stroke-width="0.12" transform="rotate(.03 385.5 456.35)">Y1</text><text x="420.5" y="461.23" font-size="11.6" text-anchor="middle" textLength="20.74" lengthAdjust="spacingAndGlyphs" fill="#ece8ae" fill-opacity="1" stroke="#ece8ae" stroke-opacity="1" stroke-width="0.12" transform="rotate(.03 420.5 457)">C13</text><text x="420.5" y="480.13" font-size="11.6" text-anchor="middle" textLength="20.74" lengthAdjust="spacingAndGlyphs" fill="#ece8ae" fill-opacity="1" stroke="#ece8ae" stroke-opacity="1" stroke-width="0.12" transform="rotate(.03 420.5 475.9)">C14</text><text x="464.3" y="470.33" font-size="11.6" text-anchor="middle" textLength="21.76" lengthAdjust="spacingAndGlyphs" fill="#ece8ae" fill-opacity="1" stroke="#ece8ae" stroke-opacity="1" stroke-width="0.45" transform="rotate(.03 464.3 466.1)">SW1</text></g></g>
<g transform="translate(6.80 30.20) scale(1.06)"><path d="M-4.2 -4.2 H2.8 L4.2 -2.8 V4.2 H-4.2 Z" fill="#3b3b3b"/><rect x="-2.6" y="-3.6" width="4.2" height="2.6" fill="#fff"/><rect x="-2.8" y="1" width="5.6" height="3.2" fill="#fff"/><rect x=".2" y="-3.3" width="1" height="2" fill="#3b3b3b"/></g><g transform="translate(23.00 30.20) scale(1.06)"><rect x="-4.4" y="-4.2" width="8.8" height="8.4" rx=".8" fill="#2e8b3a"/><rect x="-4.4" y="-4.2" width="8.8" height="2.2" fill="#226b2c"/><circle cx="1.8" cy="1.6" r="1.9" fill="#c8283c"/><circle cx="1.8" cy="1.6" r=".8" fill="#fff"/><path d="M-2.6 3 V-.5 H-.4" stroke="#d8f0d8" stroke-width=".7" fill="none"/></g><g transform="translate(39.20 30.20) scale(1.06)"><path d="M-3.6 -4 H1.2 L3.4 -1.8 V4.4 H-3.6 Z" fill="#fff" stroke="#8a8a8a" stroke-width=".7"/><path d="M-2.4 -4.6 V3.6" stroke="#9a9a9a" stroke-width=".6"/><path d="M1.2 -4 V-1.8 H3.4" fill="none" stroke="#8a8a8a" stroke-width=".6"/></g><g transform="translate(52.20 30.20) scale(1.06)"><rect x="-2.8" y="-4.4" width="5.6" height="2.6" fill="#fff" stroke="#3b3b3b" stroke-width=".8"/><rect x="-4.6" y="-2" width="9.2" height="4.4" rx=".8" fill="#3b3b3b"/><rect x="-2.8" y="1" width="5.6" height="3.4" fill="#fff" stroke="#3b3b3b" stroke-width=".8"/></g><g transform="translate(65.40 30.20) scale(1.06)"><rect x="-2.6" y="-4.4" width="5.2" height="2.4" fill="#9a9a9a"/><rect x="-4.6" y="-2.4" width="9.2" height="3" fill="#3b3b3b"/><rect x="-3.4" y=".2" width="6.8" height="4.2" fill="#fff" stroke="#3b3b3b" stroke-width=".8"/><rect x="-1.8" y="-.4" width="3.6" height="2" fill="#3b3b3b"/></g><g transform="translate(81.40 30.20) scale(1.06)"><path d="M-2.6 -1.6 A3.4 3.4 0 1 1 -1.2 3.6" fill="none" stroke="#3b3b3b" stroke-width=".9"/><path d="M-3.6 -4.2 V-1.2 H-.6" fill="none" stroke="#3b3b3b" stroke-width=".9"/></g><g transform="translate(95.20 30.20) scale(1.06)"><g transform="scale(-1 1)"><path d="M-2.6 -1.6 A3.4 3.4 0 1 1 -1.2 3.6" fill="none" stroke="#c4c4c4" stroke-width=".9"/><path d="M-3.6 -4.2 V-1.2 H-.6" fill="none" stroke="#c4c4c4" stroke-width=".9"/></g></g><g transform="translate(110.80 30.20) scale(1.06)"><circle cx=".6" cy="-1" r="3" fill="none" stroke="#3b3b3b" stroke-width=".9"/><path d="M-1.6 1.2 L-4.2 4.2" stroke="#3b3b3b" stroke-width="1.2"/><path d="M-1.4 .2 L.6 -2.6 L2.6 .2" fill="none" stroke="#3b3b3b" stroke-width=".7"/></g><g transform="translate(127.20 30.20) scale(1.06)"><path d="M-3.8 -.6 A3.9 3.9 0 0 1 3 -2.6" fill="none" stroke="#3b3b3b" stroke-width="1"/><path d="M3.8 .6 A3.9 3.9 0 0 1 -3 2.6" fill="none" stroke="#3b3b3b" stroke-width="1"/><path d="M3.8 -4.4 V-1.6 H1" fill="none" stroke="#3b3b3b" stroke-width=".9"/><path d="M-3.8 4.4 V1.6 H-1" fill="none" stroke="#3b3b3b" stroke-width=".9"/></g><g transform="translate(140.40 30.20) scale(1.06)"><circle cx="-.8" cy="-.8" r="3.2" fill="none" stroke="#3b3b3b" stroke-width=".9"/><path d="M1.6 1.6 L4.4 4.4" stroke="#3b3b3b" stroke-width="1.2"/><path d="M-2.6 -.8 H1 M-.8 -2.6 V1" stroke="#3b3b3b" stroke-width=".8"/></g><g transform="translate(153.20 30.20) scale(1.06)"><circle cx="-.8" cy="-.8" r="3.2" fill="none" stroke="#3b3b3b" stroke-width=".9"/><path d="M1.6 1.6 L4.4 4.4" stroke="#3b3b3b" stroke-width="1.2"/><path d="M-2.6 -.8 H1" stroke="#3b3b3b" stroke-width=".8"/></g><g transform="translate(166.00 30.20) scale(1.06)"><circle cx="-.8" cy="-.8" r="3.2" fill="none" stroke="#3b3b3b" stroke-width=".9"/><path d="M1.6 1.6 L4.4 4.4" stroke="#3b3b3b" stroke-width="1.2"/><rect x="-2.3" y="-2.3" width="3" height="3" fill="none" stroke="#3b3b3b" stroke-width=".7"/></g><g transform="translate(178.80 30.20) scale(1.06)"><circle cx="-.8" cy="-.8" r="3.2" fill="none" stroke="#3b3b3b" stroke-width=".9"/><path d="M1.6 1.6 L4.4 4.4" stroke="#3b3b3b" stroke-width="1.2"/><path d="M-2.6 -.2 L-.8 -2.4 L1 -.2 M-2 .2 H.4" fill="none" stroke="#3b3b3b" stroke-width=".6"/></g><g transform="translate(191.60 30.20) scale(1.06)"><circle cx="-.8" cy="-.8" r="3.2" fill="none" stroke="#3b3b3b" stroke-width=".9"/><path d="M1.6 1.6 L4.4 4.4" stroke="#3b3b3b" stroke-width="1.2"/><path d="M-1.8 -2.4 V.6 L-.9 -.2 L0 1 L.4 .7 L-.3 -.5 L.8 -.6 Z" fill="#3b3b3b"/></g><g transform="translate(207.60 30.20) scale(1.06)"><path d="M-4.4 4 H4.4 L-4.4 -.2 Z" fill="#6e6e6e"/><path d="M3.4 -.6 A3.6 3.6 0 0 0 -.4 -4" fill="none" stroke="#1a81c4" stroke-width="1.1"/><path d="M-.2 -5.4 L-2.4 -3.8 L0 -2.4 Z" fill="#1a81c4"/></g><g transform="translate(220.80 30.20) scale(1.06)"><g transform="scale(-1 1)"><path d="M-4.4 4 H4.4 L-4.4 -.2 Z" fill="#6e6e6e"/><path d="M3.4 -.6 A3.6 3.6 0 0 0 -.4 -4" fill="none" stroke="#1a81c4" stroke-width="1.1"/><path d="M-.2 -5.4 L-2.4 -3.8 L0 -2.4 Z" fill="#1a81c4"/></g></g><g transform="translate(233.80 30.20) scale(1.06)"><path d="M-4.4 -3.6 L4.6 0 L-4.4 3.6 Z" fill="#1a81c4"/><path d="M-4.4 0 H4.6" stroke="#fff" stroke-width=".6"/></g><g transform="translate(246.60 30.20) scale(1.06)"><path d="M-.6 -4 V4 H-4.4 Z" fill="#747474"/><path d="M.6 -4 V4 H4.4 Z" fill="#1a81c4"/></g><g transform="translate(259.60 30.20) scale(1.06)"><rect x="-3.6" y="-3.6" width="7.2" height="7.2" fill="none" stroke="#b9b9b9" stroke-width=".7" stroke-dasharray="1.4 .8"/><rect x="-2" y="-2" width="2.6" height="2.6" fill="none" stroke="#b9b9b9" stroke-width=".6"/><rect x="-.4" y="-.2" width="2.6" height="2.6" fill="none" stroke="#b9b9b9" stroke-width=".6"/></g><g transform="translate(272.60 30.20) scale(1.06)"><rect x="-4" y="-3.8" width="4.6" height="4.6" fill="none" stroke="#b9b9b9" stroke-width=".7" stroke-dasharray="1.2 .7"/><rect x="-.6" y="-.6" width="4.6" height="4.6" fill="none" stroke="#b9b9b9" stroke-width=".7" stroke-dasharray="1.2 .7"/></g><g transform="translate(285.40 30.20) scale(1.06)"><rect x="-3.2" y="-.6" width="6.4" height="4.8" rx=".6" fill="#b9b9b9"/><path d="M-2 -.6 V-2.2 A2 2 0 0 1 2 -2.2 V-.6" fill="none" stroke="#b9b9b9" stroke-width="1"/><rect x="-.5" y=".8" width="1" height="1.8" fill="#fff"/></g><g transform="translate(298.00 30.20) scale(1.06)"><rect x="-3.8" y="-.6" width="6.4" height="4.8" rx=".6" fill="#b9b9b9"/><path d="M.6 -.6 V-2.4 A1.9 1.9 0 0 1 4.4 -2.4 V-1.6" fill="none" stroke="#b9b9b9" stroke-width="1"/><rect x="-1.1" y=".8" width="1" height="1.8" fill="#fff"/></g><g transform="translate(315.60 30.20) scale(1.06)"><rect x="-3.9" y="-3.6" width="7.8" height="7.2" rx="1" fill="#fff" stroke="#1a81c4" stroke-width=".9"/><circle cx="-3.3" cy="-3.9" r=".95" fill="#1a81c4"/><circle cx="-3.3" cy="3.9" r=".95" fill="#1a81c4"/><circle cx="-1.1" cy="-3.9" r=".95" fill="#1a81c4"/><circle cx="-1.1" cy="3.9" r=".95" fill="#1a81c4"/><circle cx="1.1" cy="-3.9" r=".95" fill="#1a81c4"/><circle cx="1.1" cy="3.9" r=".95" fill="#1a81c4"/><circle cx="3.3" cy="-3.9" r=".95" fill="#1a81c4"/><circle cx="3.3" cy="3.9" r=".95" fill="#1a81c4"/><circle cx="2" cy="1.9" r="2.5" fill="#c8283c"/><path d="M.9 3 L3.1 .8" stroke="#fff" stroke-width=".8"/></g><g transform="translate(328.20 30.20) scale(1.06)"><rect x="-4.2" y="-3.8" width="2" height="7.4" fill="#5c5c5c"/><rect x="-1.8" y="-3.8" width="1.6" height="7.4" fill="#8a3a3a"/><rect x=".2" y="-3.8" width="2" height="7.4" fill="#5c5c5c"/><circle cx="1.9" cy="1.5" r="2.2" fill="#fff" stroke="#c8283c" stroke-width=".8"/><path d="M3.3 3.1 L4.7 4.7" stroke="#c8283c" stroke-width="1"/></g><g transform="translate(340.60 30.20) scale(1.06)"><rect x="-3.4" y="-4" width="6.8" height="5.4" fill="#3b3b3b"/><path d="M-4.6 2 H4.6 L3.8 3.8 H-3.8 Z" fill="#1a81c4"/><path d="M-4.6 4.2 H4.6" stroke="#1a81c4" stroke-width=".6"/></g><g transform="translate(357.20 30.20) scale(1.06)"><rect x="-4.3" y="-4.2" width="8.6" height="8.6" rx=".6" fill="#3f9a3f"/><rect x="-4.3" y="-4.2" width="3.8" height="8.6" fill="#8c3434"/><path d="M-2.6 -3.4 L-1.4 -.4 L-3 1" stroke="#e6c8c8" stroke-width=".6" fill="none"/><circle cx="-2" cy="2.4" r="1.7" fill="#c8283c"/><path d="M1.6 3 V-1 M.4 .2 L1.6 -1.4 L2.8 .2" fill="none" stroke="#1c5c1c" stroke-width=".8"/><circle cx="2.4" cy="-3" r=".8" fill="#e8e0a0"/></g><g transform="translate(370.20 30.20) scale(1.06)"><path d="M-4.2 -3.4 H-2.6 M-4.2 -.8 H-2.6 M-4.2 1.8 H-2.6" stroke="#6a7a9a" stroke-width="1"/><path d="M-1.6 -3.4 H2.6 M-1.6 -.8 H.2" stroke="#a8a8a8" stroke-width=".7"/><circle cx="1.6" cy="1.6" r="2.9" fill="#c8283c"/><path d="M.2 1.6 L1.3 2.7 L3.1 .5" fill="none" stroke="#fff" stroke-width=".8"/></g><g transform="translate(386.20 30.20) scale(1.06)"><rect x="-4.3" y="-4.4" width="8.6" height="8.8" rx=".5" fill="#d9d2c4"/><path d="M.4 -4.4 V-1.6 H4.3" stroke="#c8283c" stroke-width="1" fill="none"/><path d="M-4.3 1 Q-.6 .6 .2 -1.4 M.2 -1.4 Q.4 2.6 -1.6 4.4" stroke="#5a4a3a" stroke-width=".8" fill="none"/><circle cx=".2" cy="-1.4" r=".9" fill="#4a3a2a"/></g><g transform="translate(402.20 30.20) scale(1.06)"><rect x="-4.4" y="-4" width="8.8" height="8" rx=".6" fill="#4c4c4c"/><path d="M-2.8 -1.8 L-1 -.2 L-2.8 1.4" fill="none" stroke="#fff" stroke-width=".8"/><path d="M0 1.8 H2.6" stroke="#fff" stroke-width=".7"/></g><g transform="translate(420.00 30.20) scale(1.06)"><circle cx=".8" cy=".4" r="2.6" fill="none" stroke="#f08c14" stroke-width="1.5"/><circle cx=".8" cy=".4" r=".9" fill="#2a5a9a"/><path d="M-4.6 -.2 L-.8 -2.6 M-4.2 2.4 L-1.6 1.4 M-.6 -3.6 L1.6 -2.2" stroke="#f08c14" stroke-width="1"/></g><text x="427.4" y="30" font-size="3.4" font-weight="bold" fill="#555" font-family="Liberation Sans,sans-serif">GBR</text><text x="427.4" y="33.6" font-size="2.9" fill="#999" font-family="Liberation Sans,sans-serif">Order</text><path d="M15 25.4 V35.2" stroke="#dcdcdc" stroke-width=".6"/><path d="M32.6 25.4 V35.2" stroke="#dcdcdc" stroke-width=".6"/><path d="M73.2 25.4 V35.2" stroke="#dcdcdc" stroke-width=".6"/><path d="M103 25.4 V35.2" stroke="#dcdcdc" stroke-width=".6"/><path d="M118.8 25.4 V35.2" stroke="#dcdcdc" stroke-width=".6"/><path d="M199.4 25.4 V35.2" stroke="#dcdcdc" stroke-width=".6"/><path d="M306.6 25.4 V35.2" stroke="#dcdcdc" stroke-width=".6"/><path d="M348.8 25.4 V35.2" stroke="#dcdcdc" stroke-width=".6"/><path d="M378.2 25.4 V35.2" stroke="#dcdcdc" stroke-width=".6"/><path d="M394.4 25.4 V35.2" stroke="#dcdcdc" stroke-width=".6"/><path d="M410.2 25.4 V35.2" stroke="#dcdcdc" stroke-width=".6"/>
<rect x="83.2" y="38.4" width="12" height="12.4" rx="1.2" fill="#f6c3b1" stroke="#eda68c" stroke-width=".6"/><path d="M85.6 40.6 V46.4 Q85.6 48.2 87.4 48.2 H91 Q92.8 48.2 92.8 46.4 V40.6" fill="none" stroke="#3b3b3b" stroke-width=".9"/><path d="M87.6 44.6 H90.8" stroke="#3b3b3b" stroke-width=".6"/><rect x="88" y="47.4" width="2.4" height="1.8" fill="#1a81c4"/><path d="M88.4 42.6 V44 M90 42.6 V44" stroke="#3b3b3b" stroke-width=".5"/><rect x="253.4" y="39.8" width="9.4" height="9.4" fill="#c42a34"/><path d="M261.2 39.8 H262.8 V49.2 H257 Z" fill="#3a6cc0"/><path d="M257 49.2 L261.2 39.8" stroke="#e8e8f0" stroke-width=".8"/><rect x="187" y="41.6" width="6" height="6" fill="#c83434" stroke="#8a2a2a" stroke-width=".4"/><path d="M180.6 39.6 V49.8" stroke="#dcdcdc" stroke-width=".6"/><path d="M250.4 39.6 V49.8" stroke="#dcdcdc" stroke-width=".6"/><path d="M265.6 39.6 V49.8" stroke="#dcdcdc" stroke-width=".6"/><path d="M377.8 39.6 V49.8" stroke="#dcdcdc" stroke-width=".6"/>
<rect x="0" y="54.7" width="12" height="11.6" rx=".5" fill="#f7c4b0" stroke="#f0ad94" stroke-width=".4"/><rect x="0" y="118.39999999999999" width="12" height="11.6" rx=".5" fill="#f7c4b0" stroke="#f0ad94" stroke-width=".4"/><rect x="0" y="148.1" width="12" height="11.6" rx=".5" fill="#f7c4b0" stroke="#f0ad94" stroke-width=".4"/><rect x="0" y="163.7" width="12" height="11.6" rx=".5" fill="#f7c4b0" stroke="#f0ad94" stroke-width=".4"/><rect x="0" y="175.5" width="12" height="11.6" rx=".5" fill="#f7c4b0" stroke="#f0ad94" stroke-width=".4"/><rect x="0" y="223.1" width="12" height="11.6" rx=".5" fill="#f7c4b0" stroke="#f0ad94" stroke-width=".4"/><rect x="0" y="294.40000000000003" width="12" height="11.6" rx=".5" fill="#f7c4b0" stroke="#f0ad94" stroke-width=".4"/><g transform="translate(6.20 60.60) scale(1.06)"><rect x="-3.9" y="-3.9" width="1.2" height="1.2" fill="#8c5a4a"/><rect x="-3.9" y="-1.6999999999999997" width="1.2" height="1.2" fill="#8c5a4a"/><rect x="-3.9" y="0.5000000000000004" width="1.2" height="1.2" fill="#8c5a4a"/><rect x="-3.9" y="2.7000000000000006" width="1.2" height="1.2" fill="#8c5a4a"/><rect x="-1.6999999999999997" y="-3.9" width="1.2" height="1.2" fill="#8c5a4a"/><rect x="-1.6999999999999997" y="-1.6999999999999997" width="1.2" height="1.2" fill="#8c5a4a"/><rect x="-1.6999999999999997" y="0.5000000000000004" width="1.2" height="1.2" fill="#8c5a4a"/><rect x="-1.6999999999999997" y="2.7000000000000006" width="1.2" height="1.2" fill="#8c5a4a"/><rect x="0.5000000000000004" y="-3.9" width="1.2" height="1.2" fill="#8c5a4a"/><rect x="0.5000000000000004" y="-1.6999999999999997" width="1.2" height="1.2" fill="#8c5a4a"/><rect x="0.5000000000000004" y="0.5000000000000004" width="1.2" height="1.2" fill="#8c5a4a"/><rect x="0.5000000000000004" y="2.7000000000000006" width="1.2" height="1.2" fill="#8c5a4a"/><rect x="2.7000000000000006" y="-3.9" width="1.2" height="1.2" fill="#8c5a4a"/><rect x="2.7000000000000006" y="-1.6999999999999997" width="1.2" height="1.2" fill="#8c5a4a"/><rect x="2.7000000000000006" y="0.5000000000000004" width="1.2" height="1.2" fill="#8c5a4a"/><rect x="2.7000000000000006" y="2.7000000000000006" width="1.2" height="1.2" fill="#8c5a4a"/></g><g transform="translate(6.20 73.30) scale(1.06)"><rect x="-3.9" y="-3.9" width="1" height="1" fill="#8a8a8a"/><rect x="-3.9" y="-1.6999999999999997" width="1" height="1" fill="#8a8a8a"/><rect x="-3.9" y="0.5000000000000004" width="1" height="1" fill="#8a8a8a"/><rect x="-3.9" y="2.7000000000000006" width="1" height="1" fill="#8a8a8a"/><rect x="-1.6999999999999997" y="-3.9" width="1" height="1" fill="#8a8a8a"/><rect x="-1.6999999999999997" y="-1.6999999999999997" width="1" height="1" fill="#8a8a8a"/><rect x="-1.6999999999999997" y="0.5000000000000004" width="1" height="1" fill="#8a8a8a"/><rect x="-1.6999999999999997" y="2.7000000000000006" width="1" height="1" fill="#8a8a8a"/><rect x="0.5000000000000004" y="-3.9" width="1" height="1" fill="#8a8a8a"/><rect x="0.5000000000000004" y="-1.6999999999999997" width="1" height="1" fill="#8a8a8a"/><rect x="0.5000000000000004" y="0.5000000000000004" width="1" height="1" fill="#8a8a8a"/><rect x="0.5000000000000004" y="2.7000000000000006" width="1" height="1" fill="#8a8a8a"/><rect x="2.7000000000000006" y="-3.9" width="1" height="1" fill="#8a8a8a"/><rect x="2.7000000000000006" y="-1.6999999999999997" width="1" height="1" fill="#8a8a8a"/><rect x="2.7000000000000006" y="0.5000000000000004" width="1" height="1" fill="#8a8a8a"/><rect x="2.7000000000000006" y="2.7000000000000006" width="1" height="1" fill="#8a8a8a"/><path d="M-4 4 L4 -4" stroke="#3b3b3b" stroke-width=".7"/></g><g transform="translate(6.20 85.80) scale(1.06)"><path d="M-3.6 -4 V3.6 H4" fill="none" stroke="#3b3b3b" stroke-width=".8"/><path d="M-3.6 3.6 L2.6 -2.6" stroke="#3b3b3b" stroke-width=".6"/><circle cx="2.4" cy="-2.2" r="1.3" fill="#c8283c"/></g><g transform="translate(6.20 99.00) scale(1.06)"><text x="0" y=".6" text-anchor="middle" font-size="5.2" fill="#3b3b3b" font-family="Liberation Sans,sans-serif">in</text><path d="M-3 2.7 H3" stroke="#3b3b3b" stroke-width="1.1" fill="none"/><path d="M-4.4 2.7 L-2.8 1.5 V3.9 Z M4.4 2.7 L2.8 1.5 V3.9 Z" fill="#3b3b3b"/></g><g transform="translate(6.20 111.50) scale(1.06)"><text x="0" y=".6" text-anchor="middle" font-size="5.2" fill="#3b3b3b" font-family="Liberation Sans,sans-serif">mil</text><path d="M-3 2.7 H3" stroke="#3b3b3b" stroke-width="1.1" fill="none"/><path d="M-4.4 2.7 L-2.8 1.5 V3.9 Z M4.4 2.7 L2.8 1.5 V3.9 Z" fill="#3b3b3b"/></g><g transform="translate(6.20 124.30) scale(1.06)"><text x="0" y=".6" text-anchor="middle" font-size="5.2" fill="#3b3b3b" font-family="Liberation Sans,sans-serif">mm</text><path d="M-3 2.7 H3" stroke="#3b3b3b" stroke-width="1.1" fill="none"/><path d="M-4.4 2.7 L-2.8 1.5 V3.9 Z M4.4 2.7 L2.8 1.5 V3.9 Z" fill="#3b3b3b"/></g><g transform="translate(6.20 138.90) scale(1.06)"><path d="M0 -4.6 V4.6 M-4.6 0 H4.6" stroke="#1a81c4" stroke-width=".7"/><path d="M-.8 -1.4 V3 L.2 2.2 L1 3.8 L1.7 3.4 L.9 2 L2.2 1.8 Z" fill="#3b3b3b"/></g><g transform="translate(6.20 154.00) scale(1.06)"><path d="M-3.8 -4.2 V3.8 H4.2" fill="none" stroke="#3b3b3b" stroke-width="1"/><path d="M-3.8 3.8 L3.4 -3.4" stroke="#3b3b3b" stroke-width=".7"/><path d="M-1 3.8 A2.8 2.8 0 0 0 -1.8 1.8" fill="none" stroke="#c8283c" stroke-width=".7"/></g><g transform="translate(6.20 169.60) scale(1.06)"><path d="M-4 -3 L3.6 3.4 M-4 3 L3.8 -3.6 M-3 -3.6 L0 4" stroke="#8a6a5a" stroke-width=".6"/><circle cx="-3.6" cy="-3" r="1" fill="none" stroke="#3b3b3b" stroke-width=".5"/><circle cx="3.4" cy="-3.2" r="1" fill="none" stroke="#3b3b3b" stroke-width=".5"/><circle cx="0" cy="3.6" r="1" fill="none" stroke="#3b3b3b" stroke-width=".5"/></g><g transform="translate(6.20 181.40) scale(1.06)"><path d="M-4 3.6 Q-3 -2 4 -3.6 M-2.6 4.2 Q0 0 4.2 -1.4" fill="none" stroke="#8a6a5a" stroke-width=".7"/><path d="M-4.2 -2.6 L3 4" stroke="#3b3b3b" stroke-width=".5"/></g><g transform="translate(6.20 199.30) scale(1.06)"><path d="M-4.4 -3 Q-1 -3.6 1 -1 T4.6 1" fill="none" stroke="#c8283c" stroke-width="1"/><path d="M-4.4 -.8 Q-1 -1.4 1 1.2 T4.6 3.2" fill="none" stroke="#6a3a8a" stroke-width="1"/><path d="M-4.4 1.4 Q-1 .8 1 3.4" fill="none" stroke="#f08c14" stroke-width=".9"/></g><g transform="translate(6.20 213.90) scale(1.06)"><path d="M-4.2 -2.4 H-1 Q1.4 -2.4 1.4 0 V4.2 M-4.2 0 H-2 Q-.8 0 -.8 1.2 V4.2 M3.6 -4 V4.2" fill="none" stroke="#a8a8a8" stroke-width=".7"/></g><g transform="translate(6.20 229.00) scale(1.06)"><path d="M-4.2 4 V-.4 H-1 V-3.8 H4.2 V4 Z" fill="#1a81c4"/><rect x=".6" y="-2.2" width="2" height="1.6" fill="#fff"/></g><g transform="translate(6.20 242.50) scale(1.06)"><path d="M-4.2 3.8 V-.2 H-.8 V-3.6 H4.2 V3.8 Z" fill="none" stroke="#7aa8cc" stroke-width=".7" stroke-dasharray="1.3 .9"/></g><g transform="translate(6.20 258.40) scale(1.06)"><rect x="-4.3" y="-4.2" width="8.6" height="8.4" rx="2.2" fill="#fff" stroke="#9a9a9a" stroke-width=".5"/><circle cx="-2.5" cy="-2.2" r="1.15" fill="#1a81c4"/><circle cx=".1" cy="-2.2" r="1.15" fill="#1a81c4"/><circle cx="2.7" cy="-2.2" r="1.15" fill="#1a81c4"/><circle cx="-2.5" cy="2.4" r="1.1" fill="none" stroke="#1a81c4" stroke-width=".6"/><circle cx=".1" cy="2.4" r="1.1" fill="none" stroke="#1a81c4" stroke-width=".6"/><circle cx="2.7" cy="2.4" r="1.1" fill="none" stroke="#1a81c4" stroke-width=".6"/><path d="M-4 3.4 L4.2 -1.2" stroke="#3b3b3b" stroke-width=".55"/></g><g transform="translate(6.20 271.00) scale(1.06)"><circle cx="0" cy=".2" r="3.6" fill="#fff" stroke="#c8c8c8" stroke-width=".6"/><path d="M-2.55 2.75 A3.6 3.6 0 0 1 2.55 -2.35 Z" fill="#f08c14"/><circle cx="0" cy=".2" r="1.2" fill="#fff"/><path d="M-4.4 4.4 L4.6 -4.4" stroke="#3b3b3b" stroke-width=".6"/></g><g transform="translate(6.20 283.40) scale(1.06)"><path d="M-4.6 .6 H4.6" stroke="#1a81c4" stroke-width="1.1"/><path d="M-.6 -4.6 V4.6" stroke="#c8283c" stroke-width="1.1"/><path d="M-4.2 4.4 L4.4 -4.2" stroke="#3b3b3b" stroke-width=".6"/></g><g transform="translate(6.20 300.30) scale(1.06)"><path d="M0 -1 L3.9 1.6 L0 4.2 L-3.9 1.6 Z" fill="#d8a868"/><path d="M0 -4.2 L3.9 -1.2 L0 1.8 L-3.9 -1.2 Z" fill="#1a81c4"/></g><g transform="translate(6.20 313.40) scale(1.06)"><path d="M-4 -4 L4 4" stroke="#1a81c4" stroke-width="1.5"/><path d="M4 -4 L-4 4" stroke="#3b3b3b" stroke-width="1.5"/><circle cx="3.4" cy="-3.4" r="1.5" fill="#3b3b3b"/></g><path d="M2 146.4 H10.6" stroke="#e0e0e0" stroke-width=".6"/><path d="M2 190.8 H10.6" stroke="#e0e0e0" stroke-width=".6"/><path d="M2 221.4 H10.6" stroke="#e0e0e0" stroke-width=".6"/><path d="M2 250.4 H10.6" stroke="#e0e0e0" stroke-width=".6"/><path d="M2 291.6 H10.6" stroke="#e0e0e0" stroke-width=".6"/>
<rect x="889.1" y="54.3" width="11.6" height="11.9" rx=".5" fill="#f7c4b0" stroke="#f0ad94" stroke-width=".4"/><g transform="translate(895.50 60.20) scale(1.06)"><path d="M-1.8 -3.6 V3 L-.4 1.8 L.8 4.2 L1.9 3.7 L.7 1.4 L2.6 1.2 Z" fill="#3b3b3b"/></g><g transform="translate(895.50 73.00) scale(1.06)"><path d="M-4.2 -4.2 Q-1 -1 0 0 Q1 1 4.2 4.2 M4.2 -4.2 Q1 -1 0 0 Q-1 1 -4.2 4.2" fill="none" stroke="#8c8c8c" stroke-width=".7"/></g><g transform="translate(895.50 89.00) scale(1.06)"><rect x="-3.8" y="-3" width="7.6" height="6" rx="1.2" fill="#fff" stroke="#1a81c4" stroke-width="1"/><circle cx="-2.8" cy="-3.6" r=".9" fill="#1a81c4"/><circle cx="-2.8" cy="3.6" r=".9" fill="#1a81c4"/><circle cx="-0.8999999999999999" cy="-3.6" r=".9" fill="#1a81c4"/><circle cx="-0.8999999999999999" cy="3.6" r=".9" fill="#1a81c4"/><circle cx="1.0" cy="-3.6" r=".9" fill="#1a81c4"/><circle cx="1.0" cy="3.6" r=".9" fill="#1a81c4"/><circle cx="2.8999999999999995" cy="-3.6" r=".9" fill="#1a81c4"/><circle cx="2.8999999999999995" cy="3.6" r=".9" fill="#1a81c4"/></g><g transform="translate(895.50 102.80) scale(1.06)"><path d="M-4.2 3.4 Q-1.6 3.4 -.6 .4 T4.2 -3.4" fill="none" stroke="#1a81c4" stroke-width="1.1"/><path d="M4.6 2.3999999999999995 V4.6 H2.3999999999999995 Z" fill="#3b3b3b"/></g><g transform="translate(895.50 114.90) scale(1.06)"><path d="M-4.4 2.6 H-3 V-2 H-1.2 V2.6 H.6 V-2 H2.4 V2.6 H4.4" fill="none" stroke="#1a81c4" stroke-width=".9" stroke-linejoin="round"/><path d="M4.8 3.3999999999999995 V5.6 H2.5999999999999996 Z" fill="#3b3b3b"/></g><g transform="translate(895.50 128.10) scale(1.06)"><circle cx="0" cy="0" r="2.05" fill="none" stroke="#f08c14" stroke-width="1.7"/></g><g transform="translate(895.50 140.40) scale(1.06)"><path d="M-4.2 4 V-.4 H-1 V-3.8 H4.2 V4 Z" fill="#1a81c4"/><rect x=".4" y="-2.2" width="2.2" height="1.6" fill="#fff"/></g><g transform="translate(895.50 153.80) scale(1.06)"><clipPath id="rcp"><rect x="-4" y="-4" width="8" height="8"/></clipPath><g clip-path="url(#rcp)"><path d="M-10.4 4 L-2.4000000000000004 -4" stroke="#3b3b3b" stroke-width=".5"/><path d="M-8.8 4 L-0.8000000000000007 -4" stroke="#3b3b3b" stroke-width=".5"/><path d="M-7.2 4 L0.7999999999999998 -4" stroke="#3b3b3b" stroke-width=".5"/><path d="M-5.6 4 L2.4000000000000004 -4" stroke="#3b3b3b" stroke-width=".5"/><path d="M-4.0 4 L4.0 -4" stroke="#3b3b3b" stroke-width=".5"/><path d="M-2.4 4 L5.6 -4" stroke="#3b3b3b" stroke-width=".5"/><path d="M-0.7999999999999998 4 L7.2 -4" stroke="#3b3b3b" stroke-width=".5"/><path d="M0.8000000000000007 4 L8.8 -4" stroke="#3b3b3b" stroke-width=".5"/><path d="M2.4000000000000004 4 L10.4 -4" stroke="#3b3b3b" stroke-width=".5"/><g transform="scale(-1 1)"><path d="M-10.4 4 L-2.4000000000000004 -4" stroke="#3b3b3b" stroke-width=".5"/><path d="M-8.8 4 L-0.8000000000000007 -4" stroke="#3b3b3b" stroke-width=".5"/><path d="M-7.2 4 L0.7999999999999998 -4" stroke="#3b3b3b" stroke-width=".5"/><path d="M-5.6 4 L2.4000000000000004 -4" stroke="#3b3b3b" stroke-width=".5"/><path d="M-4.0 4 L4.0 -4" stroke="#3b3b3b" stroke-width=".5"/><path d="M-2.4 4 L5.6 -4" stroke="#3b3b3b" stroke-width=".5"/><path d="M-0.7999999999999998 4 L7.2 -4" stroke="#3b3b3b" stroke-width=".5"/><path d="M0.8000000000000007 4 L8.8 -4" stroke="#3b3b3b" stroke-width=".5"/><path d="M2.4000000000000004 4 L10.4 -4" stroke="#3b3b3b" stroke-width=".5"/></g></g></g><g transform="translate(895.50 170.20) scale(1.06)"><path d="M-4.2 4 L4.2 -4" stroke="#3b3b3b" stroke-width=".8"/></g><g transform="translate(895.50 183.00) scale(1.06)"><path d="M-3.6 4 A7.6 7.6 0 0 1 4 -3.6" fill="none" stroke="#3b3b3b" stroke-width=".8"/></g><g transform="translate(895.50 196.20) scale(1.06)"><rect x="-3.8" y="-3.4" width="7.6" height="6.8" fill="#bdbdbd" stroke="#3b3b3b" stroke-width=".8"/></g><g transform="translate(895.50 209.40) scale(1.06)"><circle cx="0" cy="0" r="3.6" fill="#bdbdbd" stroke="#3b3b3b" stroke-width=".8"/></g><g transform="translate(895.50 222.00) scale(1.06)"><path d="M-3.8 -3.8 L4 -2.6 L2.8 3.8 L-2.6 3.2 L-.6 0 Z" fill="#bdbdbd" stroke="#3b3b3b" stroke-width=".8" stroke-linejoin="round"/></g><g transform="translate(895.50 234.50) scale(1.06)"><path d="M-4.2 1.4 H.4 Q1.6 1.4 1.6 .2 V-1.4 H4.2" fill="none" stroke="#1a81c4" stroke-width=".8"/><path d="M-2.6 -.2 V3 M3 -3 V.2" stroke="#3b3b3b" stroke-width=".6"/></g><g transform="translate(895.50 247.20) scale(1.06)"><rect x="-4" y="-4" width="8" height="8" rx=".8" fill="#3b3b3b"/><path d="M-3 3 L-.6 -.4 L1 1.6 L2 .6 L3.2 3 Z" fill="#fff"/><circle cx="1.8" cy="-1.8" r=".9" fill="#fff"/></g><g transform="translate(895.50 260.00) scale(1.06)"><path d="M-3.2 -3.8 H3.2 M0 -3.8 V4" stroke="#3b3b3b" stroke-width="1.3" fill="none"/></g><g transform="translate(895.50 272.80) scale(1.06)"><rect x="-4" y="-3.4" width="8" height="6.8" fill="#fff" stroke="#3b3b3b" stroke-width=".8"/><rect x="-2.4" y="-1.6" width="4.8" height="3.4" fill="#c4c4c4"/><path d="M-1.4 -.8 H1.4 M0 -.8 V1.2" stroke="#3b3b3b" stroke-width=".5"/></g><g transform="translate(895.50 286.00) scale(1.06)"><rect x="-4" y="-3.8" width="8" height="7.6" fill="#fff" stroke="#6a6a6a" stroke-width=".6"/><path d="M-4 -1.6 H4 M-4 .4 H4 M-4 2.2 H4 M-1.4 -3.8 V3.8 M1.4 -3.8 V3.8" stroke="#8a8a8a" stroke-width=".5"/></g><g transform="translate(895.50 299.70) scale(1.06)"><path d="M-3.6 -3.4 H2.8 V3" fill="none" stroke="#3b3b3b" stroke-width=".7"/><circle cx="-3.6" cy="-3.4" r=".9" fill="#1a81c4"/><circle cx="-.6" cy="3.4" r=".9" fill="#1a81c4"/><path d="M-.6 3.4 H1.4" stroke="#3b3b3b" stroke-width=".5"/><path d="M5 2.8 V5 H2.8 Z" fill="#3b3b3b"/></g><g transform="translate(895.50 312.50) scale(1.06)"><path d="M-3.8 -4 V2.4 L-2.2 1 L-1 3.4 L0 3 L-1.1 .7 L.8 .4 Z" fill="#3b3b3b"/><circle cx="1.8" cy="1.6" r="2.2" fill="none" stroke="#c8283c" stroke-width="1.4"/></g><g transform="translate(895.50 328.70) scale(1.06)"><path d="M-3.0 -4.2 V4.2 M-4.2 -3.0 H4.2" stroke="#3b3b3b" stroke-width=".6" stroke-dasharray=".9 .9"/><path d="M-0.7999999999999998 -4.2 V4.2 M-4.2 -0.7999999999999998 H4.2" stroke="#3b3b3b" stroke-width=".6" stroke-dasharray=".9 .9"/><path d="M1.4000000000000004 -4.2 V4.2 M-4.2 1.4000000000000004 H4.2" stroke="#3b3b3b" stroke-width=".6" stroke-dasharray=".9 .9"/><path d="M3.6000000000000005 -4.2 V4.2 M-4.2 3.6000000000000005 H4.2" stroke="#3b3b3b" stroke-width=".6" stroke-dasharray=".9 .9"/><path d="M-.8 -2.4 V4 M-4 .8 H2.4" stroke="#1a81c4" stroke-width=".8"/><path d="M5 3.2 V5.4 H2.8 Z" fill="#3b3b3b"/></g><g transform="translate(895.50 341.70) scale(1.06)"><g transform="rotate(-45)"><rect x="-4.6" y="-1.5" width="9.2" height="3" fill="#fff" stroke="#3b3b3b" stroke-width=".7"/><path d="M-3 -1.5 V0 M-1.4 -1.5 V-.2 M.2 -1.5 V0 M1.8 -1.5 V-.2 M3.2 -1.5 V0" stroke="#3b3b3b" stroke-width=".4"/></g></g><path d="M890.4 80.6 H900.6" stroke="#e0e0e0" stroke-width=".6"/><path d="M890.4 161.8 H900.6" stroke="#e0e0e0" stroke-width=".6"/><path d="M890.4 320.4 H900.6" stroke="#e0e0e0" stroke-width=".6"/>
<path d="M964.2 6.8 H966.8" stroke="#444" stroke-width=".7"/><rect x="977.9" y="4.4" width="2.3" height="2.3" fill="none" stroke="#444" stroke-width=".6"/><path d="M991.5 4.2 L994.1 6.8 M994.1 4.2 L991.5 6.8" stroke="#444" stroke-width=".7"/><path d="M73.5 43.8 L75.4 45.8 L77.30000000000001 43.8" fill="none" stroke="#6a6a6a" stroke-width=".75"/><path d="M170.5 43.8 L172.4 45.8 L174.3 43.8" fill="none" stroke="#6a6a6a" stroke-width=".75"/><path d="M241.9 43.8 L243.8 45.8 L245.70000000000002 43.8" fill="none" stroke="#6a6a6a" stroke-width=".75"/><path d="M366.1 43.8 L368 45.8 L369.9 43.8" fill="none" stroke="#6a6a6a" stroke-width=".75"/><path d="M423.1 43.8 L425 45.8 L426.9 43.8" fill="none" stroke="#6a6a6a" stroke-width=".75"/><path d="M988 443.8 L990 445.8 L992 443.8" fill="none" stroke="#6a6a6a" stroke-width=".75"/><path d="M988 467 L990 469 L992 467" fill="none" stroke="#6a6a6a" stroke-width=".75"/><circle cx="923" cy="80.40" r="3.1" fill="#484848"/><ellipse cx="923" cy="80.40" rx="2.25" ry="1.4" fill="#dcdcdc"/><circle cx="923" cy="80.40" r="1" fill="#484848"/><circle cx="923" cy="88.03" r="3.1" fill="#484848"/><ellipse cx="923" cy="88.03" rx="2.25" ry="1.4" fill="#dcdcdc"/><circle cx="923" cy="88.03" r="1" fill="#484848"/><circle cx="923" cy="95.66" r="3.1" fill="#484848"/><ellipse cx="923" cy="95.66" rx="2.25" ry="1.4" fill="#dcdcdc"/><circle cx="923" cy="95.66" r="1" fill="#484848"/><circle cx="923" cy="103.30" r="3.1" fill="#484848"/><ellipse cx="923" cy="103.30" rx="2.25" ry="1.4" fill="#dcdcdc"/><circle cx="923" cy="103.30" r="1" fill="#484848"/><circle cx="923" cy="110.93" r="3.1" fill="#484848"/><ellipse cx="923" cy="110.93" rx="2.25" ry="1.4" fill="#dcdcdc"/><circle cx="923" cy="110.93" r="1" fill="#484848"/><circle cx="923" cy="118.56" r="3.1" fill="#484848"/><ellipse cx="923" cy="118.56" rx="2.25" ry="1.4" fill="#dcdcdc"/><circle cx="923" cy="118.56" r="1" fill="#484848"/><circle cx="923" cy="126.19" r="3.1" fill="#484848"/><ellipse cx="923" cy="126.19" rx="2.25" ry="1.4" fill="#dcdcdc"/><circle cx="923" cy="126.19" r="1" fill="#484848"/><circle cx="923" cy="133.82" r="3.1" fill="#484848"/><ellipse cx="923" cy="133.82" rx="2.25" ry="1.4" fill="#dcdcdc"/><circle cx="923" cy="133.82" r="1" fill="#484848"/><circle cx="923" cy="141.46" r="3.1" fill="#484848"/><ellipse cx="923" cy="141.46" rx="2.25" ry="1.4" fill="#dcdcdc"/><circle cx="923" cy="141.46" r="1" fill="#484848"/><circle cx="923" cy="149.09" r="3.1" fill="#484848"/><ellipse cx="923" cy="149.09" rx="2.25" ry="1.4" fill="#dcdcdc"/><circle cx="923" cy="149.09" r="1" fill="#484848"/><circle cx="923" cy="156.72" r="3.1" fill="#484848"/><ellipse cx="923" cy="156.72" rx="2.25" ry="1.4" fill="#dcdcdc"/><circle cx="923" cy="156.72" r="1" fill="#484848"/><circle cx="923" cy="164.35" r="3.1" fill="#484848"/><ellipse cx="923" cy="164.35" rx="2.25" ry="1.4" fill="#dcdcdc"/><circle cx="923" cy="164.35" r="1" fill="#484848"/><circle cx="923" cy="171.98" r="3.1" fill="#484848"/><ellipse cx="923" cy="171.98" rx="2.25" ry="1.4" fill="#dcdcdc"/><circle cx="923" cy="171.98" r="1" fill="#484848"/><circle cx="923" cy="179.62" r="3.1" fill="#484848"/><ellipse cx="923" cy="179.62" rx="2.25" ry="1.4" fill="#dcdcdc"/><circle cx="923" cy="179.62" r="1" fill="#484848"/><circle cx="923" cy="187.25" r="3.1" fill="#484848"/><ellipse cx="923" cy="187.25" rx="2.25" ry="1.4" fill="#dcdcdc"/><circle cx="923" cy="187.25" r="1" fill="#484848"/><circle cx="923" cy="194.88" r="3.1" fill="#484848"/><ellipse cx="923" cy="194.88" rx="2.25" ry="1.4" fill="#dcdcdc"/><circle cx="923" cy="194.88" r="1" fill="#484848"/><circle cx="923" cy="202.51" r="3.1" fill="#484848"/><ellipse cx="923" cy="202.51" rx="2.25" ry="1.4" fill="#dcdcdc"/><circle cx="923" cy="202.51" r="1" fill="#484848"/><circle cx="923" cy="210.14" r="3.1" fill="#484848"/><ellipse cx="923" cy="210.14" rx="2.25" ry="1.4" fill="#dcdcdc"/><circle cx="923" cy="210.14" r="1" fill="#484848"/><circle cx="923" cy="217.78" r="3.1" fill="#484848"/><ellipse cx="923" cy="217.78" rx="2.25" ry="1.4" fill="#dcdcdc"/><circle cx="923" cy="217.78" r="1" fill="#484848"/><circle cx="923" cy="225.41" r="3.1" fill="#484848"/><ellipse cx="923" cy="225.41" rx="2.25" ry="1.4" fill="#dcdcdc"/><circle cx="923" cy="225.41" r="1" fill="#484848"/><circle cx="923" cy="233.04" r="3.1" fill="#484848"/><ellipse cx="923" cy="233.04" rx="2.25" ry="1.4" fill="#dcdcdc"/><circle cx="923" cy="233.04" r="1" fill="#484848"/><circle cx="923" cy="240.67" r="3.1" fill="#484848"/><ellipse cx="923" cy="240.67" rx="2.25" ry="1.4" fill="#dcdcdc"/><circle cx="923" cy="240.67" r="1" fill="#484848"/><circle cx="923" cy="248.30" r="3.1" fill="#484848"/><ellipse cx="923" cy="248.30" rx="2.25" ry="1.4" fill="#dcdcdc"/><circle cx="923" cy="248.30" r="1" fill="#484848"/><circle cx="923" cy="255.94" r="3.1" fill="#484848"/><ellipse cx="923" cy="255.94" rx="2.25" ry="1.4" fill="#dcdcdc"/><circle cx="923" cy="255.94" r="1" fill="#484848"/><path d="M906.5 78.6 L908.5 80.4 L906.5 82.2 Z" fill="#2a2ae0"/><path d="M909.3 418.6 L911.5 420.6 L909.3 422.6 Z" fill="#222"/><path d="M909.5 491.90 L910.8 493.20 L912.9 490.60" fill="none" stroke="#fff" stroke-width=".8"/><path d="M909.5 500.33 L910.8 501.63 L912.9 499.03" fill="none" stroke="#fff" stroke-width=".8"/><path d="M952.6 500.33 L953.9 501.63 L956 499.03" fill="none" stroke="#fff" stroke-width=".8"/><path d="M909.5 508.76 L910.8 510.06 L912.9 507.46" fill="none" stroke="#fff" stroke-width=".8"/><path d="M952.6 508.76 L953.9 510.06 L956 507.46" fill="none" stroke="#fff" stroke-width=".8"/><path d="M909.5 517.19 L910.8 518.49 L912.9 515.89" fill="none" stroke="#fff" stroke-width=".8"/><path d="M952.6 517.19 L953.9 518.49 L956 515.89" fill="none" stroke="#fff" stroke-width=".8"/><path d="M909.5 525.62 L910.8 526.92 L912.9 524.32" fill="none" stroke="#fff" stroke-width=".8"/><path d="M952.6 525.62 L953.9 526.92 L956 524.32" fill="none" stroke="#fff" stroke-width=".8"/><path d="M909.5 534.05 L910.8 535.35 L912.9 532.75" fill="none" stroke="#fff" stroke-width=".8"/><path d="M952.6 534.05 L953.9 535.35 L956 532.75" fill="none" stroke="#fff" stroke-width=".8"/>
<g font-family="Liberation Sans,DejaVu Sans,sans-serif"><text x="467.3" y="7.1" font-size="6.0" fill="#3a3a3a" font-weight="bold" textLength="64" lengthAdjust="spacingAndGlyphs" transform="rotate(.03 467.3 7.1)">devboard — PCB Editor</text><text x="2.3" y="19.85" font-size="6.1" fill="#555" textLength="9.2" lengthAdjust="spacingAndGlyphs" transform="rotate(.03 2.3 19.85)">File</text><text x="18.1" y="19.85" font-size="6.1" fill="#555" textLength="10.4" lengthAdjust="spacingAndGlyphs" transform="rotate(.03 18.1 19.85)">Edit</text><text x="35.4" y="19.85" font-size="6.1" fill="#555" textLength="13.1" lengthAdjust="spacingAndGlyphs" transform="rotate(.03 35.4 19.85)">View</text><text x="55" y="19.85" font-size="6.1" fill="#555" textLength="14" lengthAdjust="spacingAndGlyphs" transform="rotate(.03 55 19.85)">Place</text><text x="75.9" y="19.85" font-size="6.1" fill="#555" textLength="16" lengthAdjust="spacingAndGlyphs" transform="rotate(.03 75.9 19.85)">Route</text><text x="98.75" y="19.85" font-size="6.1" fill="#555" textLength="18.5" lengthAdjust="spacingAndGlyphs" transform="rotate(.03 98.75 19.85)">Inspect</text><text x="124.25" y="19.85" font-size="6.1" fill="#555" textLength="13.75" lengthAdjust="spacingAndGlyphs" transform="rotate(.03 124.25 19.85)">Tools</text><text x="144.5" y="19.85" font-size="6.1" fill="#555" textLength="32.5" lengthAdjust="spacingAndGlyphs" transform="rotate(.03 144.5 19.85)">Preferences</text><text x="183" y="19.85" font-size="6.1" fill="#555" textLength="12" lengthAdjust="spacingAndGlyphs" transform="rotate(.03 183 19.85)">Help</text><text x="5.5" y="46.65" font-size="6.0" fill="#5c5c5c" textLength="65.25" lengthAdjust="spacingAndGlyphs" transform="rotate(.03 5.5 46.65)">Track: use netclass width</text><text x="104.25" y="46.65" font-size="6.0" fill="#5c5c5c" textLength="56.5" lengthAdjust="spacingAndGlyphs" transform="rotate(.03 104.25 46.65)">Via: use netclass sizes</text><text x="193.75" y="46.65" font-size="6.0" fill="#5c5c5c" textLength="36.25" lengthAdjust="spacingAndGlyphs" transform="rotate(.03 193.75 46.65)">F.Cu (PgUp)</text><text x="273" y="46.65" font-size="6.0" fill="#5c5c5c" textLength="58.75" lengthAdjust="spacingAndGlyphs" transform="rotate(.03 273 46.65)">0.0500 mm (0.0020 in)</text><text x="385.75" y="46.65" font-size="6.0" fill="#5c5c5c" textLength="28" lengthAdjust="spacingAndGlyphs" transform="rotate(.03 385.75 46.65)">Zoom 5.00</text><text x="905.3" y="56.9" font-size="5.0" fill="#4a4a4a" textLength="24.1" lengthAdjust="spacingAndGlyphs" transform="rotate(.03 905.3 56.9)">Appearance</text><text x="912.9" y="70.7" font-size="6.2" fill="#5a5a5a" textLength="16.4" lengthAdjust="spacingAndGlyphs" transform="rotate(.03 912.9 70.7)">Layers</text><text x="941.9" y="70.7" font-size="6.2" fill="#5a5a5a" textLength="21" lengthAdjust="spacingAndGlyphs" transform="rotate(.03 941.9 70.7)">Objects</text><text x="976" y="70.7" font-size="6.2" fill="#5a5a5a" textLength="11.7" lengthAdjust="spacingAndGlyphs" transform="rotate(.03 976 70.7)">Nets</text><text x="928" y="82.5" font-size="5.7" fill="#555" textLength="9.9" lengthAdjust="spacingAndGlyphs" transform="rotate(.03 928 82.5)">F.Cu</text><text x="928" y="90.132" font-size="5.7" fill="#555" textLength="10.9" lengthAdjust="spacingAndGlyphs" transform="rotate(.03 928 90.132)">B.Cu</text><text x="928" y="97.764" font-size="5.7" fill="#555" textLength="26.1" lengthAdjust="spacingAndGlyphs" transform="rotate(.03 928 97.764)">F.Adhesive</text><text x="928" y="105.396" font-size="5.7" fill="#555" textLength="26.9" lengthAdjust="spacingAndGlyphs" transform="rotate(.03 928 105.396)">B.Adhesive</text><text x="928" y="113.02799999999999" font-size="5.7" fill="#555" textLength="17" lengthAdjust="spacingAndGlyphs" transform="rotate(.03 928 113.02799999999999)">F.Paste</text><text x="928" y="120.66" font-size="5.7" fill="#555" textLength="18.1" lengthAdjust="spacingAndGlyphs" transform="rotate(.03 928 120.66)">B.Paste</text><text x="928" y="128.292" font-size="5.7" fill="#555" textLength="27.2" lengthAdjust="spacingAndGlyphs" transform="rotate(.03 928 128.292)">F.Silkscreen</text><text x="928" y="135.924" font-size="5.7" fill="#555" textLength="27.7" lengthAdjust="spacingAndGlyphs" transform="rotate(.03 928 135.924)">B.Silkscreen</text><text x="928" y="143.556" font-size="5.7" fill="#555" textLength="16" lengthAdjust="spacingAndGlyphs" transform="rotate(.03 928 143.556)">F.Mask</text><text x="928" y="151.18800000000002" font-size="5.7" fill="#555" textLength="16.6" lengthAdjust="spacingAndGlyphs" transform="rotate(.03 928 151.18800000000002)">B.Mask</text><text x="928" y="158.82" font-size="5.7" fill="#555" textLength="33.6" lengthAdjust="spacingAndGlyphs" transform="rotate(.03 928 158.82)">User.Drawings</text><text x="928" y="166.452" font-size="5.7" fill="#555" textLength="37.9" lengthAdjust="spacingAndGlyphs" transform="rotate(.03 928 166.452)">User.Comments</text><text x="928" y="174.084" font-size="5.7" fill="#555" textLength="22.3" lengthAdjust="spacingAndGlyphs" transform="rotate(.03 928 174.084)">User.Eco1</text><text x="928" y="181.71599999999998" font-size="5.7" fill="#555" textLength="22.6" lengthAdjust="spacingAndGlyphs" transform="rotate(.03 928 181.71599999999998)">User.Eco2</text><text x="928" y="189.34799999999998" font-size="5.7" fill="#555" textLength="23.6" lengthAdjust="spacingAndGlyphs" transform="rotate(.03 928 189.34799999999998)">Edge.Cuts</text><text x="928" y="196.98" font-size="5.7" fill="#555" textLength="16.6" lengthAdjust="spacingAndGlyphs" transform="rotate(.03 928 196.98)">Margin</text><text x="928" y="204.612" font-size="5.7" fill="#555" textLength="27.7" lengthAdjust="spacingAndGlyphs" transform="rotate(.03 928 204.612)">F.Courtyard</text><text x="928" y="212.244" font-size="5.7" fill="#555" textLength="28.3" lengthAdjust="spacingAndGlyphs" transform="rotate(.03 928 212.244)">B.Courtyard</text><text x="928" y="219.876" font-size="5.7" fill="#555" textLength="11.9" lengthAdjust="spacingAndGlyphs" transform="rotate(.03 928 219.876)">F.Fab</text><text x="928" y="227.50799999999998" font-size="5.7" fill="#555" textLength="12.5" lengthAdjust="spacingAndGlyphs" transform="rotate(.03 928 227.50799999999998)">B.Fab</text><text x="928" y="235.14" font-size="5.7" fill="#555" textLength="14" lengthAdjust="spacingAndGlyphs" transform="rotate(.03 928 235.14)">User.1</text><text x="928" y="242.772" font-size="5.7" fill="#555" textLength="14.3" lengthAdjust="spacingAndGlyphs" transform="rotate(.03 928 242.772)">User.2</text><text x="928" y="250.404" font-size="5.7" fill="#555" textLength="14.3" lengthAdjust="spacingAndGlyphs" transform="rotate(.03 928 250.404)">User.3</text><text x="928" y="258.036" font-size="5.7" fill="#555" textLength="14.3" lengthAdjust="spacingAndGlyphs" transform="rotate(.03 928 258.036)">User.4</text><text x="913" y="422.7" font-size="5.7" fill="#2e2e2e" textLength="51.5" lengthAdjust="spacingAndGlyphs" transform="rotate(.03 913 422.7)">Layer Display Options</text><text x="907.1" y="435.4" font-size="5.85" fill="#5c5c5c" textLength="43.3" lengthAdjust="spacingAndGlyphs" transform="rotate(.03 907.1 435.4)">Presets (Ctrl+Tab):</text><text x="912" y="446.2" font-size="5.85" fill="#777" textLength="5.7" lengthAdjust="spacingAndGlyphs" transform="rotate(.03 912 446.2)">---</text><text x="907.1" y="458.3" font-size="5.85" fill="#5c5c5c" textLength="52.2" lengthAdjust="spacingAndGlyphs" transform="rotate(.03 907.1 458.3)">Viewports (Shift+Tab):</text><text x="912" y="469.4" font-size="5.85" fill="#777" textLength="5.7" lengthAdjust="spacingAndGlyphs" transform="rotate(.03 912 469.4)">---</text><text x="905.4" y="483.9" font-size="5.0" fill="#4a4a4a" textLength="29.8" lengthAdjust="spacingAndGlyphs" transform="rotate(.03 905.4 483.9)">Selection Filter</text><text x="915.5" y="494.0" font-size="5.85" fill="#4c4c4c" textLength="20.6" lengthAdjust="spacingAndGlyphs" transform="rotate(.03 915.5 494.0)">All items</text><text x="959.1" y="494.0" font-size="5.85" fill="#4c4c4c" textLength="32" lengthAdjust="spacingAndGlyphs" transform="rotate(.03 959.1 494.0)">Locked items</text><text x="915.5" y="502.43" font-size="5.85" fill="#4c4c4c" textLength="25.5" lengthAdjust="spacingAndGlyphs" transform="rotate(.03 915.5 502.43)">Footprints</text><text x="959.1" y="502.43" font-size="5.85" fill="#4c4c4c" textLength="10.4" lengthAdjust="spacingAndGlyphs" transform="rotate(.03 959.1 502.43)">Text</text><text x="915.5" y="510.86" font-size="5.85" fill="#4c4c4c" textLength="15.4" lengthAdjust="spacingAndGlyphs" transform="rotate(.03 915.5 510.86)">Tracks</text><text x="959.1" y="510.86" font-size="5.85" fill="#4c4c4c" textLength="9.9" lengthAdjust="spacingAndGlyphs" transform="rotate(.03 959.1 510.86)">Vias</text><text x="915.5" y="519.29" font-size="5.85" fill="#4c4c4c" textLength="11.6" lengthAdjust="spacingAndGlyphs" transform="rotate(.03 915.5 519.29)">Pads</text><text x="959.1" y="519.29" font-size="5.85" fill="#4c4c4c" textLength="20.9" lengthAdjust="spacingAndGlyphs" transform="rotate(.03 959.1 519.29)">Graphics</text><text x="915.5" y="527.72" font-size="5.85" fill="#4c4c4c" textLength="14.5" lengthAdjust="spacingAndGlyphs" transform="rotate(.03 915.5 527.72)">Zones</text><text x="959.1" y="527.72" font-size="5.85" fill="#4c4c4c" textLength="24.9" lengthAdjust="spacingAndGlyphs" transform="rotate(.03 959.1 527.72)">Rule Areas</text><text x="915.5" y="536.15" font-size="5.85" fill="#4c4c4c" textLength="28.2" lengthAdjust="spacingAndGlyphs" transform="rotate(.03 915.5 536.15)">Dimensions</text><text x="959.1" y="536.15" font-size="5.85" fill="#4c4c4c" textLength="28.5" lengthAdjust="spacingAndGlyphs" transform="rotate(.03 959.1 536.15)">Other items</text><text x="5" y="545.8" font-size="5.85" fill="#4c4c4c" textLength="12" lengthAdjust="spacingAndGlyphs" transform="rotate(.03 5 545.8)">Pads</text><text x="30" y="545.8" font-size="5.85" fill="#4c4c4c" textLength="11.25" lengthAdjust="spacingAndGlyphs" transform="rotate(.03 30 545.8)">Vias</text><text x="54.5" y="545.8" font-size="5.85" fill="#4c4c4c" textLength="41.75" lengthAdjust="spacingAndGlyphs" transform="rotate(.03 54.5 545.8)">Track Segments</text><text x="108.75" y="545.8" font-size="5.85" fill="#4c4c4c" textLength="12" lengthAdjust="spacingAndGlyphs" transform="rotate(.03 108.75 545.8)">Nets</text><text x="133.75" y="545.8" font-size="5.85" fill="#4c4c4c" textLength="25.5" lengthAdjust="spacingAndGlyphs" transform="rotate(.03 133.75 545.8)">Unrouted</text><text x="5" y="553.1" font-size="5.85" fill="#4c4c4c" textLength="8.75" lengthAdjust="spacingAndGlyphs" transform="rotate(.03 5 553.1)">192</text><text x="30" y="553.1" font-size="5.85" fill="#4c4c4c" transform="rotate(.03 30 553.1)">0</text><text x="54.5" y="553.1" font-size="5.85" fill="#4c4c4c" transform="rotate(.03 54.5 553.1)">0</text><text x="108.75" y="553.1" font-size="5.85" fill="#4c4c4c" textLength="6.75" lengthAdjust="spacingAndGlyphs" transform="rotate(.03 108.75 553.1)">53</text><text x="133.75" y="553.1" font-size="5.85" fill="#4c4c4c" textLength="9.25" lengthAdjust="spacingAndGlyphs" transform="rotate(.03 133.75 553.1)">127</text><text x="1.25" y="561.6" font-size="5.85" fill="#4c4c4c" textLength="239.25" lengthAdjust="spacingAndGlyphs" transform="rotate(.03 1.25 561.6)">File '/home/kai/projects/pcbs/working/devboard/PCB_DESIGN/devboard.kicad_pcb' saved.</text><text x="506" y="561.6" font-size="5.85" fill="#4c4c4c" textLength="16" lengthAdjust="spacingAndGlyphs" transform="rotate(.03 506 561.6)">Z 5.22</text><text x="540" y="561.6" font-size="5.85" fill="#4c4c4c" textLength="53.2" lengthAdjust="spacingAndGlyphs" transform="rotate(.03 540 561.6)">X 26.5500  Y 21.5000</text><text x="616.8" y="561.6" font-size="5.85" fill="#4c4c4c" textLength="94" lengthAdjust="spacingAndGlyphs" transform="rotate(.03 616.8 561.6)">dx 26.5500  dy 21.5000  dist 34.1636</text><text x="740" y="561.6" font-size="5.85" fill="#4c4c4c" textLength="30" lengthAdjust="spacingAndGlyphs" transform="rotate(.03 740 561.6)">grid 0.0500</text><text x="829.2" y="561.6" font-size="5.85" fill="#4c4c4c" textLength="10" lengthAdjust="spacingAndGlyphs" transform="rotate(.03 829.2 561.6)">mm</text><text x="855.2" y="561.6" font-size="5.85" fill="#4c4c4c" textLength="36.8" lengthAdjust="spacingAndGlyphs" transform="rotate(.03 855.2 561.6)">Select item(s)</text></g>
</svg>
</body></html>
